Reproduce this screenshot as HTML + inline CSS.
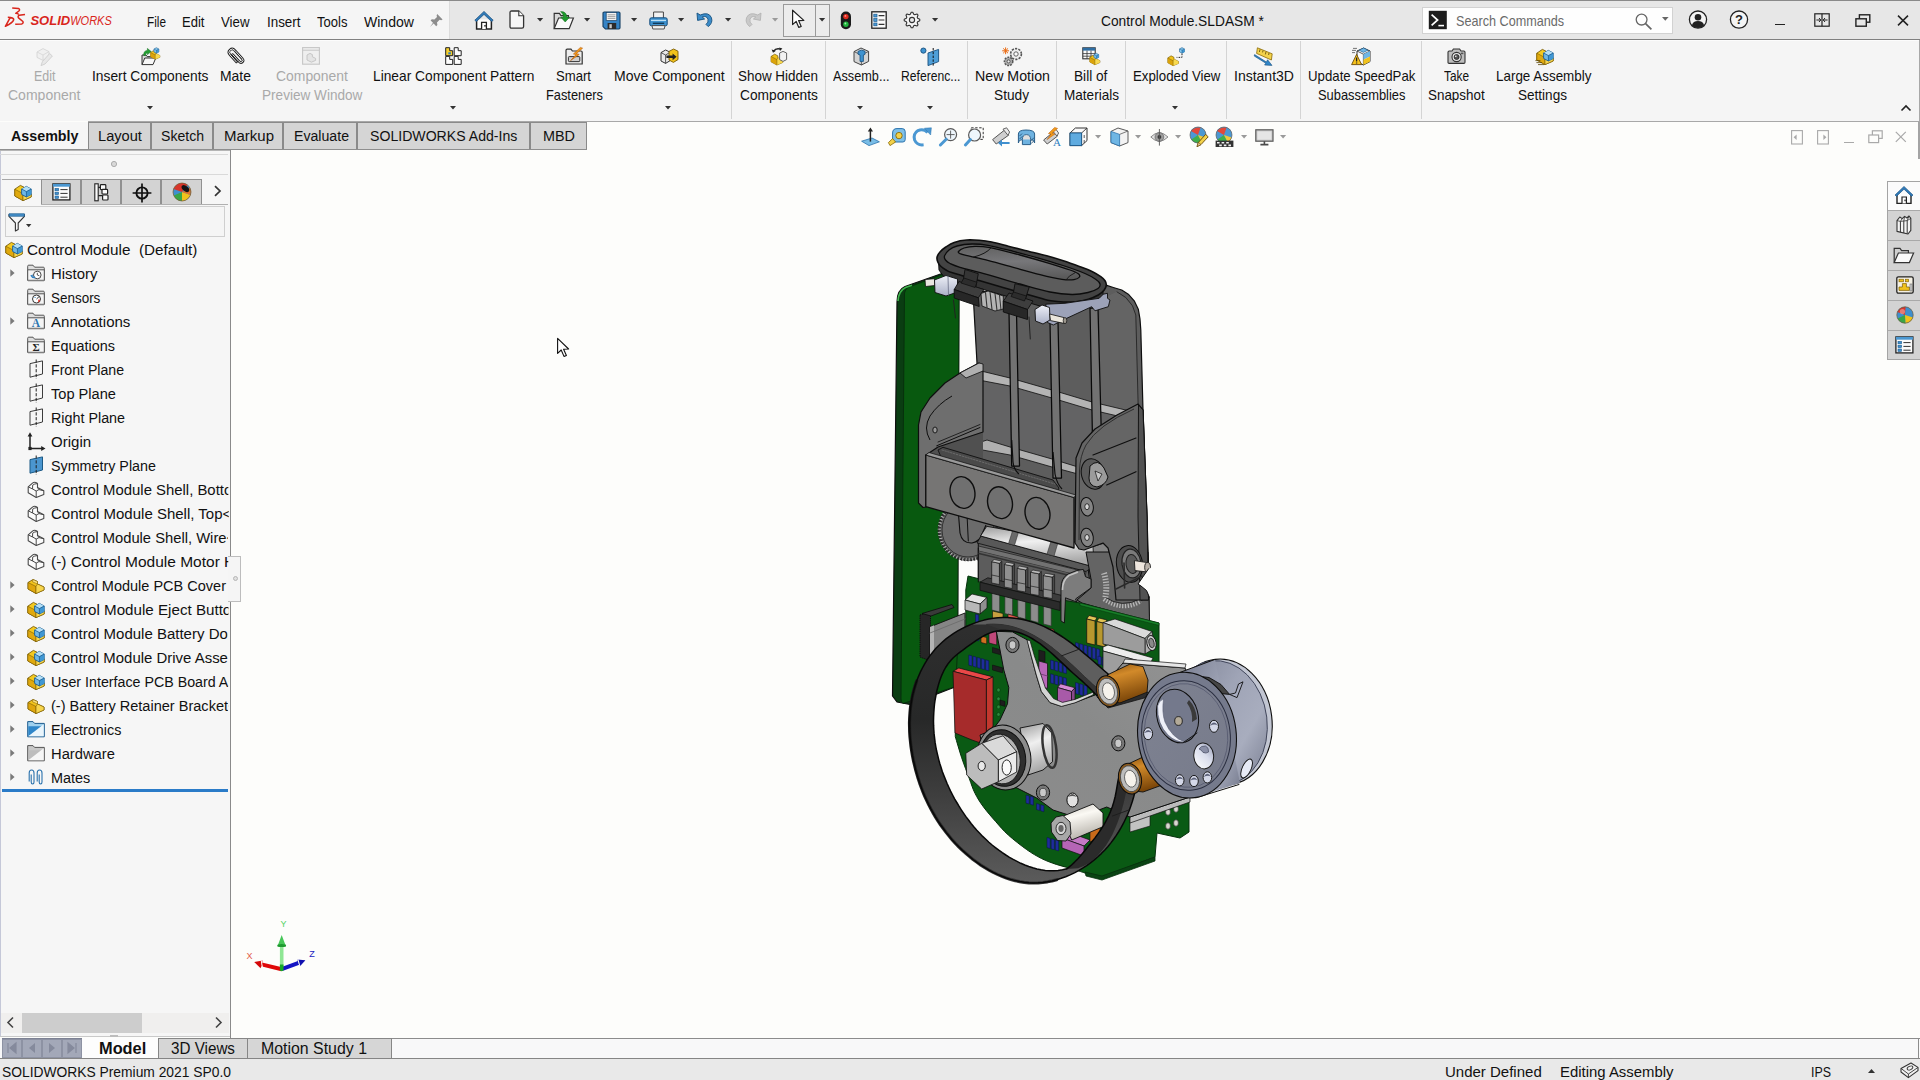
<!DOCTYPE html>
<html lang="en"><head><meta charset="utf-8"><title>SOLIDWORKS - Control Module.SLDASM</title>
<style>
html,body{margin:0;padding:0}
body{width:1920px;height:1080px;overflow:hidden;position:relative;background:#fdfdfb;font-family:"Liberation Sans",sans-serif;color:#111}
.t{position:absolute;white-space:pre;transform-origin:0 0}
.a{position:absolute}
svg{position:absolute;overflow:visible}
</style></head>
<body>
<div id="titlebar">
<div class="a" style="left:0px;top:0px;width:1920px;height:40px;background:#e7e7e7;"></div>
<div class="a" style="left:0px;top:0px;width:449px;height:40px;background:#f5f5f5;"></div>
<div class="a" style="left:0px;top:0px;width:1920px;height:1px;background:#8a8a8a;"></div>
<div class="a" style="left:449px;top:1px;width:1px;height:39px;background:#dcdcdc;"></div>
<div class="a" style="left:0px;top:39px;width:1920px;height:1px;background:#808080;"></div>
<div class="t" style="left:146.50px;top:12.78px;font-size:13.9px;line-height:18px;transform:scaleX(0.8490);color:#111;">File</div>
<div class="t" style="left:182.00px;top:12.78px;font-size:13.9px;line-height:18px;transform:scaleX(0.9384);color:#111;">Edit</div>
<div class="t" style="left:221.00px;top:12.78px;font-size:13.9px;line-height:18px;transform:scaleX(0.9537);color:#111;">View</div>
<div class="t" style="left:266.50px;top:12.78px;font-size:13.9px;line-height:18px;transform:scaleX(0.9640);color:#111;">Insert</div>
<div class="t" style="left:317.00px;top:12.78px;font-size:13.9px;line-height:18px;transform:scaleX(0.9397);color:#111;">Tools</div>
<div class="t" style="left:364.00px;top:12.78px;font-size:13.9px;line-height:18px;transform:scaleX(1.0104);color:#111;">Window</div>
<div class="t" style="left:1101.00px;top:12.38px;font-size:13.9px;line-height:18px;transform:scaleX(0.9904);color:#111;">Control Module.SLDASM *</div>
<div class="a" style="left:1422px;top:7px;width:251px;height:27px;background:#fefefe;border:1px solid #d2d2d2;box-sizing:border-box;"></div>
<div class="t" style="left:1455.50px;top:12.38px;font-size:13.9px;line-height:18px;transform:scaleX(0.9094);color:#6a6a6a;">Search Commands</div>
</div>
<div id="ribbon">
<div class="a" style="left:0px;top:40px;width:1920px;height:81px;background:#f5f5f5;"></div>
<div class="a" style="left:0px;top:40px;width:1920px;height:1px;background:#fcfcfc;"></div>
<div class="a" style="left:88px;top:121px;width:1832px;height:1px;background:#a8a8a8;"></div>
<div class="a" style="left:1919px;top:40px;width:1px;height:82px;background:#a8a8a8;"></div>
<div class="a" style="left:1918px;top:122px;width:2px;height:37px;background:#a4a4a4;"></div>
<div class="a" style="left:731px;top:41px;width:1px;height:78px;background:#d4d4d4;"></div>
<div class="a" style="left:825px;top:41px;width:1px;height:78px;background:#d4d4d4;"></div>
<div class="a" style="left:967px;top:41px;width:1px;height:78px;background:#d4d4d4;"></div>
<div class="a" style="left:1056px;top:41px;width:1px;height:78px;background:#d4d4d4;"></div>
<div class="a" style="left:1125px;top:41px;width:1px;height:78px;background:#d4d4d4;"></div>
<div class="a" style="left:1226px;top:41px;width:1px;height:78px;background:#d4d4d4;"></div>
<div class="a" style="left:1300px;top:41px;width:1px;height:78px;background:#d4d4d4;"></div>
<div class="a" style="left:1421px;top:41px;width:1px;height:78px;background:#d4d4d4;"></div>
<div class="t" style="left:34.00px;top:67.18px;font-size:13.9px;line-height:18px;transform:scaleX(0.8967);color:#a9a9a9;">Edit</div>
<div class="t" style="left:8.00px;top:86.18px;font-size:13.9px;line-height:18px;transform:scaleX(1.0089);color:#a9a9a9;">Component</div>
<div class="t" style="left:91.50px;top:67.18px;font-size:13.9px;line-height:18px;transform:scaleX(0.9919);color:#111;">Insert Components</div>
<div class="t" style="left:219.50px;top:67.18px;font-size:13.9px;line-height:18px;transform:scaleX(1.0023);color:#111;">Mate</div>
<div class="t" style="left:275.50px;top:67.18px;font-size:13.9px;line-height:18px;transform:scaleX(1.0019);color:#a9a9a9;">Component</div>
<div class="t" style="left:261.50px;top:86.18px;font-size:13.9px;line-height:18px;transform:scaleX(0.9777);color:#a9a9a9;">Preview Window</div>
<div class="t" style="left:372.50px;top:67.18px;font-size:13.9px;line-height:18px;transform:scaleX(0.9905);color:#111;">Linear Component Pattern</div>
<div class="t" style="left:556.00px;top:67.18px;font-size:13.9px;line-height:18px;transform:scaleX(0.9448);color:#111;">Smart</div>
<div class="t" style="left:545.50px;top:86.18px;font-size:13.9px;line-height:18px;transform:scaleX(0.9225);color:#111;">Fasteners</div>
<div class="t" style="left:613.70px;top:67.18px;font-size:13.9px;line-height:18px;transform:scaleX(1.0097);color:#111;">Move Component</div>
<div class="t" style="left:738.00px;top:67.18px;font-size:13.9px;line-height:18px;transform:scaleX(0.9673);color:#111;">Show Hidden</div>
<div class="t" style="left:739.50px;top:86.18px;font-size:13.9px;line-height:18px;transform:scaleX(0.9897);color:#111;">Components</div>
<div class="t" style="left:832.50px;top:67.18px;font-size:13.9px;line-height:18px;transform:scaleX(0.9145);color:#111;">Assemb...</div>
<div class="t" style="left:900.50px;top:67.18px;font-size:13.9px;line-height:18px;transform:scaleX(0.8754);color:#111;">Referenc...</div>
<div class="t" style="left:974.50px;top:67.18px;font-size:13.9px;line-height:18px;transform:scaleX(1.0219);color:#111;">New Motion</div>
<div class="t" style="left:994.00px;top:86.18px;font-size:13.9px;line-height:18px;transform:scaleX(0.9855);color:#111;">Study</div>
<div class="t" style="left:1074.00px;top:67.18px;font-size:13.9px;line-height:18px;transform:scaleX(0.9837);color:#111;">Bill of</div>
<div class="t" style="left:1064.00px;top:86.18px;font-size:13.9px;line-height:18px;transform:scaleX(0.9758);color:#111;">Materials</div>
<div class="t" style="left:1132.50px;top:67.18px;font-size:13.9px;line-height:18px;transform:scaleX(0.9538);color:#111;">Exploded View</div>
<div class="t" style="left:1234.00px;top:67.18px;font-size:13.9px;line-height:18px;transform:scaleX(1.0085);color:#111;">Instant3D</div>
<div class="t" style="left:1307.50px;top:67.18px;font-size:13.9px;line-height:18px;transform:scaleX(0.9524);color:#111;">Update SpeedPak</div>
<div class="t" style="left:1317.50px;top:86.18px;font-size:13.9px;line-height:18px;transform:scaleX(0.9285);color:#111;">Subassemblies</div>
<div class="t" style="left:1444.00px;top:67.18px;font-size:13.9px;line-height:18px;transform:scaleX(0.8524);color:#111;">Take</div>
<div class="t" style="left:1428.00px;top:86.18px;font-size:13.9px;line-height:18px;transform:scaleX(0.9655);color:#111;">Snapshot</div>
<div class="t" style="left:1495.50px;top:67.18px;font-size:13.9px;line-height:18px;transform:scaleX(0.9656);color:#111;">Large Assembly</div>
<div class="t" style="left:1518.00px;top:86.18px;font-size:13.9px;line-height:18px;transform:scaleX(0.9752);color:#111;">Settings</div>
<svg style="left:146.5px;top:106.25px" width="6.0" height="3.5" viewBox="0 0 6.0 3.5"><path d="M0 0H6.0L3.0 3.5Z" fill="#333"/></svg>
<svg style="left:450.0px;top:106.25px" width="6.0" height="3.5" viewBox="0 0 6.0 3.5"><path d="M0 0H6.0L3.0 3.5Z" fill="#333"/></svg>
<svg style="left:665.0px;top:106.25px" width="6.0" height="3.5" viewBox="0 0 6.0 3.5"><path d="M0 0H6.0L3.0 3.5Z" fill="#333"/></svg>
<svg style="left:857.0px;top:106.25px" width="6.0" height="3.5" viewBox="0 0 6.0 3.5"><path d="M0 0H6.0L3.0 3.5Z" fill="#333"/></svg>
<svg style="left:927.0px;top:106.25px" width="6.0" height="3.5" viewBox="0 0 6.0 3.5"><path d="M0 0H6.0L3.0 3.5Z" fill="#333"/></svg>
<svg style="left:1172.0px;top:106.25px" width="6.0" height="3.5" viewBox="0 0 6.0 3.5"><path d="M0 0H6.0L3.0 3.5Z" fill="#333"/></svg>
<svg style="left:1900px;top:104px" width="12" height="8" viewBox="0 0 12 8"><path d="M1.5 6.5L6 2L10.5 6.5" fill="none" stroke="#222" stroke-width="1.6"/></svg>
</div>
<div id="cmtabs">
<div class="a" style="left:0px;top:122px;width:88px;height:28px;background:#f6f6f6;"></div>
<div class="a" style="left:88px;top:122px;width:63px;height:28px;background:#d5d5d5;border:1px solid #8a8a8a;border-bottom:none;box-sizing:border-box;"></div>
<div class="a" style="left:151px;top:122px;width:62px;height:28px;background:#d5d5d5;border:1px solid #8a8a8a;border-bottom:none;box-sizing:border-box;"></div>
<div class="a" style="left:213px;top:122px;width:70px;height:28px;background:#d5d5d5;border:1px solid #8a8a8a;border-bottom:none;box-sizing:border-box;"></div>
<div class="a" style="left:283px;top:122px;width:74px;height:28px;background:#d5d5d5;border:1px solid #8a8a8a;border-bottom:none;box-sizing:border-box;"></div>
<div class="a" style="left:357px;top:122px;width:173px;height:28px;background:#d5d5d5;border:1px solid #8a8a8a;border-bottom:none;box-sizing:border-box;"></div>
<div class="a" style="left:530px;top:122px;width:57px;height:28px;background:#d5d5d5;border:1px solid #8a8a8a;border-bottom:none;box-sizing:border-box;"></div>
<div class="a" style="left:0px;top:149px;width:587px;height:1px;background:#8e8e8e;"></div>
<div class="a" style="left:0px;top:150px;width:231px;height:1px;background:#b5b5b5;"></div>
<div class="t" style="left:10.50px;top:125.86px;font-size:15.4px;line-height:20px;transform:scaleX(0.9276);color:#111;font-weight:700;">Assembly</div>
<div class="t" style="left:98.00px;top:125.86px;font-size:15.4px;line-height:20px;transform:scaleX(0.9508);color:#111;">Layout</div>
<div class="t" style="left:161.00px;top:125.86px;font-size:15.4px;line-height:20px;transform:scaleX(0.9140);color:#111;">Sketch</div>
<div class="t" style="left:224.00px;top:125.86px;font-size:15.4px;line-height:20px;transform:scaleX(0.9735);color:#111;">Markup</div>
<div class="t" style="left:293.50px;top:125.86px;font-size:15.4px;line-height:20px;transform:scaleX(0.9181);color:#111;">Evaluate</div>
<div class="t" style="left:370.00px;top:125.86px;font-size:15.4px;line-height:20px;transform:scaleX(0.9165);color:#111;">SOLIDWORKS Add-Ins</div>
<div class="t" style="left:542.50px;top:125.86px;font-size:15.4px;line-height:20px;transform:scaleX(0.9360);color:#111;">MBD</div>
</div>
<div id="featuremanager">
<div class="a" style="left:0px;top:151px;width:230px;height:886px;background:#f6f6f6;"></div>
<div class="a" style="left:230px;top:150px;width:1px;height:888px;background:#8a8a8a;"></div>
<div class="a" style="left:0px;top:151px;width:1px;height:886px;background:#c5c8d8;"></div>
<div class="a" style="left:0px;top:154px;width:228px;height:1px;background:#d9d9d9;"></div>
<div class="a" style="left:0px;top:174px;width:228px;height:1px;background:#d9d9d9;"></div>
<svg style="left:110px;top:160px" width="8" height="8" viewBox="0 0 8 8"><circle cx="4" cy="4" r="2.6" fill="#d8d8d8" stroke="#a5a5a5" stroke-width="0.9"/></svg>
<div class="a" style="left:2px;top:179px;width:39px;height:26px;background:#f6f6f6;border-top:1px solid #a8a8a8;box-sizing:border-box;"></div>
<div class="a" style="left:41px;top:179px;width:40px;height:26px;background:#d3d3d3;border:1px solid #909090;box-sizing:border-box;"></div>
<div class="a" style="left:81px;top:179px;width:40px;height:26px;background:#d3d3d3;border:1px solid #909090;box-sizing:border-box;"></div>
<div class="a" style="left:121px;top:179px;width:40px;height:26px;background:#d3d3d3;border:1px solid #909090;box-sizing:border-box;"></div>
<div class="a" style="left:161px;top:179px;width:41px;height:26px;background:#d3d3d3;border:1px solid #909090;box-sizing:border-box;"></div>
<div class="a" style="left:41px;top:204px;width:187px;height:1px;background:#b0b0b0;"></div>
<svg style="left:213px;top:185px" width="9" height="12" viewBox="0 0 9 12"><path d="M2 1.2L7 6L2 10.8" fill="none" stroke="#333" stroke-width="1.7"/></svg>
<div class="a" style="left:5px;top:206px;width:220px;height:31px;background:#f5f5f5;border:1px solid #cfcfcf;box-sizing:border-box;"></div>
<div class="a" style="left:228px;top:556px;width:13px;height:46px;background:#f5f5f5;border:1px solid #bdbdbd;border-left:none;box-sizing:border-box;"></div>
<svg style="left:232px;top:575px" width="7" height="7" viewBox="0 0 7 7"><circle cx="3.5" cy="3.5" r="2" fill="#e0e0e0" stroke="#aaa" stroke-width="0.8"/></svg>
<div class="a" style="left:2px;top:789px;width:226px;height:3px;background:#2a7bc8;"></div>
<div class="a" style="left:1px;top:1013px;width:228px;height:20px;background:#f0efee;"></div>
<div class="a" style="left:22px;top:1013px;width:120px;height:20px;background:#cdcdcd;"></div>
<svg style="left:6px;top:1016px" width="9" height="13" viewBox="0 0 9 13"><path d="M7 1.5L2 6.5L7 11.5" fill="none" stroke="#444" stroke-width="1.6"/></svg>
<svg style="left:214px;top:1016px" width="9" height="13" viewBox="0 0 9 13"><path d="M2 1.5L7 6.5L2 11.5" fill="none" stroke="#444" stroke-width="1.6"/></svg>
<div class="a" style="left:0px;top:1036px;width:230px;height:1px;background:#c9c9c9;"></div>
<div class="a" style="left:110px;top:1035px;width:8px;height:2px;background:#bdbdbd;"></div>
</div>
<div id="bottomtabs">
<div class="a" style="left:0px;top:1038px;width:1920px;height:22px;background:#f8f8f9;"></div>
<div class="a" style="left:231px;top:1038px;width:1689px;height:1px;background:#8c8c8c;"></div>
<div class="a" style="left:1918px;top:1038px;width:1px;height:21px;background:#8c8c8c;"></div>
<div class="a" style="left:2px;top:1038px;width:80px;height:21px;background:#a3a8b8;border:1px solid #7d8294;box-sizing:border-box;"></div>
<div class="a" style="left:2px;top:1039px;width:20px;height:19px;border:1px solid #8d92a3;box-sizing:border-box;"></div>
<div class="a" style="left:22px;top:1039px;width:20px;height:19px;border:1px solid #8d92a3;box-sizing:border-box;"></div>
<div class="a" style="left:42px;top:1039px;width:20px;height:19px;border:1px solid #8d92a3;box-sizing:border-box;"></div>
<div class="a" style="left:62px;top:1039px;width:20px;height:19px;border:1px solid #8d92a3;box-sizing:border-box;"></div>
<svg style="left:2px;top:1039px" width="20" height="19" viewBox="0 0 20 19"><path d="M6 4V14M14 4L8 9L14 14Z" fill="#858a9c" stroke="#858a9c" stroke-width="1.2"/></svg>
<svg style="left:22px;top:1039px" width="20" height="19" viewBox="0 0 20 19"><path d="M13 4L7 9L13 14Z" fill="#858a9c"/></svg>
<svg style="left:42px;top:1039px" width="20" height="19" viewBox="0 0 20 19"><path d="M7 4L13 9L7 14Z" fill="#858a9c"/></svg>
<svg style="left:62px;top:1039px" width="20" height="19" viewBox="0 0 20 19"><path d="M14 4V14M6 4L12 9L6 14Z" fill="#858a9c" stroke="#858a9c" stroke-width="1.2"/></svg>
<div class="a" style="left:82px;top:1038px;width:76px;height:22px;background:#fdfdfd;"></div>
<div class="a" style="left:158px;top:1038px;width:90px;height:21px;background:#d6d6d6;border:1px solid #868686;box-sizing:border-box;"></div>
<div class="a" style="left:247px;top:1038px;width:145px;height:21px;background:#d6d6d6;border:1px solid #868686;box-sizing:border-box;"></div>
<div class="t" style="left:98.70px;top:1039.39px;font-size:15.6px;line-height:20px;transform:scaleX(1.0492);color:#111;font-weight:700;">Model</div>
<div class="t" style="left:170.50px;top:1039.39px;font-size:15.6px;line-height:20px;transform:scaleX(0.9756);color:#111;">3D Views</div>
<div class="t" style="left:261.00px;top:1039.39px;font-size:15.6px;line-height:20px;transform:scaleX(1.0187);color:#111;">Motion Study 1</div>
</div>
<div id="statusbar">
<div class="a" style="left:0px;top:1059px;width:1920px;height:21px;background:#e9e9e9;"></div>
<div class="a" style="left:0px;top:1058px;width:1920px;height:1px;background:#858585;"></div>
<div class="t" style="left:1.50px;top:1062.64px;font-size:14.6px;line-height:19px;transform:scaleX(0.9472);color:#111;">SOLIDWORKS Premium 2021 SP0.0</div>
<div class="t" style="left:1444.70px;top:1062.64px;font-size:14.6px;line-height:19px;transform:scaleX(1.0279);color:#111;">Under Defined</div>
<div class="t" style="left:1560.40px;top:1062.64px;font-size:14.6px;line-height:19px;transform:scaleX(1.0218);color:#111;">Editing Assembly</div>
<div class="t" style="left:1811.00px;top:1062.64px;font-size:14.6px;line-height:19px;transform:scaleX(0.8508);color:#111;">IPS</div>
<svg style="left:1868px;top:1069px" width="7" height="4" viewBox="0 0 7 4"><path d="M0 4H7L3.5 0Z" fill="#333"/></svg>
</div>
<div id="icons">
<svg style="left:0px;top:0px" width="120" height="34" viewBox="0 0 120 34"><g fill="none" stroke="#d9261c" stroke-width="1.55" stroke-linejoin="round"><path d="M12.2 7.9L18.4 8.4Q20.4 9.4 18.9 11L15.8 13.3Q17.8 13.5 18.8 14.6"/><path d="M10.3 17.4L5.4 26.3Q12.8 22.8 13.7 19.8Q13.9 17.5 7.8 17.2"/><path d="M25 14.4L19.2 15.3Q17.5 16.2 18.5 17.9L22.9 21.5Q23.7 23.3 21.7 23.9L15.2 24.3"/></g><text x="30.4" y="24.8" font-family="Liberation Sans,sans-serif" font-weight="700" font-style="italic" font-size="12.4" fill="#d9261c" textLength="39.8" lengthAdjust="spacingAndGlyphs">SOLID</text><text x="70.2" y="24.8" font-family="Liberation Sans,sans-serif" font-style="italic" font-size="12.4" fill="#d9261c" textLength="41.6" lengthAdjust="spacingAndGlyphs">WORKS</text></svg>
<svg style="left:429px;top:13px" width="15" height="15" viewBox="0 0 15 15"><path d="M8.2 1L13.6 6.4L12.2 7.2L10.6 6.8L8 9.4L8.4 12L7.2 13.2L4.6 10.4L1 14L4 9.8L1.6 7.4L2.8 6.2L5.4 6.6L8 4L7.6 2.4Z" fill="#8c8c8c"/></svg>
<svg style="left:474px;top:10px" width="20" height="20" viewBox="0 0 20 20"><path d="M2.6 9.4V19H17.4V9.4" fill="#fdfdfd" stroke="#222" stroke-width="1.5"/><path d="M7.6 19V12.4H12.4V19" fill="#fff" stroke="#222" stroke-width="1.3"/><rect x="10.3" y="15" width="1.4" height="1.6" fill="#222"/><path d="M0.8 10.2L10 1.4L19.2 10.2L17.6 11.6L10 4.4L2.4 11.6Z" fill="#2f7ab8" stroke="#184d7c" stroke-width="0.7"/></svg>
<svg style="left:509px;top:10px" width="16" height="19" viewBox="0 0 16 19"><path d="M1 2.6Q1 1 2.6 1H9.8L14.6 5.8V16.6Q14.6 18.2 13 18.2H2.6Q1 18.2 1 16.6Z" fill="#f7f7f7" stroke="#333" stroke-width="1.3"/><path d="M9.8 1V5.8H14.6" fill="#fff" stroke="#333" stroke-width="1.1"/></svg>
<svg style="left:553px;top:10px" width="22" height="20" viewBox="0 0 22 20"><path d="M1.2 18.6V3.4H6.4L8 5.6H15.4V8" fill="#d7d7d7" stroke="#333" stroke-width="1.2"/><path d="M1.2 18.6L5.6 8H20.4L16.2 18.6Z" fill="#fafafa" stroke="#333" stroke-width="1.2"/><path d="M7.6 1.6Q13.6 1.4 13.8 7.2H16.6L12.2 12L7.8 7.2H10.6Q10.6 4.2 7.6 1.6Z" fill="#1f9a2e" stroke="#0e6a18" stroke-width="0.5"/></svg>
<svg style="left:601.5px;top:10.5px" width="19" height="19" viewBox="0 0 19 19"><path d="M1 2.2Q1 1 2.2 1H16.8Q18 1 18 2.2V16.8Q18 18 16.8 18H3.4L1 15.6Z" fill="#3584c6" stroke="#143e63" stroke-width="1.1"/><rect x="4.2" y="1.6" width="10.6" height="8" fill="#f4f4f4" stroke="#143e63" stroke-width="0.7"/><path d="M5.6 3.8H13.4M5.6 5.6H13.4M5.6 7.4H13.4" stroke="#8a8a8a" stroke-width="0.8"/><rect x="5.6" y="12" width="8.6" height="6" fill="#2b2b2b"/><rect x="7.4" y="13.2" width="2.4" height="4" fill="#c9c9c9"/></svg>
<svg style="left:648.5px;top:10.5px" width="19" height="19" viewBox="0 0 19 19"><path d="M4.6 7V1H14.4V7" fill="#f2f2f2" stroke="#444" stroke-width="1"/><rect x="0.8" y="6.8" width="17.4" height="8" rx="1.6" fill="#3f93d0" stroke="#174f7e" stroke-width="1"/><path d="M2 9.4H17" stroke="#bfe1f6" stroke-width="1.2"/><path d="M3.8 11.6H15.2V13H3.8Z" fill="#0f3a5c"/><path d="M3 14.6H16L15.2 18H3.8Z" fill="#f0f0f0" stroke="#444" stroke-width="0.9"/></svg>
<svg style="left:696px;top:12px" width="18" height="15" viewBox="0 0 18 15"><path d="M1 1L1.6 8.4L8.6 7L6.2 5Q10.6 3.4 12 7.2Q12.8 10.4 10 12.4L12.2 14.6Q17.2 11 15.4 5.6Q12.6 -0.6 4.2 3Z" fill="#3b8cc9" stroke="#15507f" stroke-width="0.9" stroke-linejoin="round"/></svg>
<svg style="left:743.5px;top:12px" width="18" height="15" viewBox="0 0 18 15"><path d="M17 1L16.4 8.4L9.4 7L11.8 5Q7.4 3.4 6 7.2Q5.2 10.4 8 12.4L5.8 14.6Q0.8 11 2.6 5.6Q5.4 -0.6 13.8 3Z" fill="#c9c9c9" stroke="#b0b0b0" stroke-width="0.8" stroke-linejoin="round"/></svg>
<svg style="left:537.4px;top:17.5px" width="6.2" height="3.6" viewBox="0 0 6.2 3.6"><path d="M0 0H6.2L3.1 3.6Z" fill="#333"/></svg>
<svg style="left:584.4px;top:17.5px" width="6.2" height="3.6" viewBox="0 0 6.2 3.6"><path d="M0 0H6.2L3.1 3.6Z" fill="#333"/></svg>
<svg style="left:631.4px;top:17.5px" width="6.2" height="3.6" viewBox="0 0 6.2 3.6"><path d="M0 0H6.2L3.1 3.6Z" fill="#333"/></svg>
<svg style="left:678.4px;top:17.5px" width="6.2" height="3.6" viewBox="0 0 6.2 3.6"><path d="M0 0H6.2L3.1 3.6Z" fill="#333"/></svg>
<svg style="left:725.4px;top:17.5px" width="6.2" height="3.6" viewBox="0 0 6.2 3.6"><path d="M0 0H6.2L3.1 3.6Z" fill="#333"/></svg>
<svg style="left:772.1999999999999px;top:17.5px" width="6.2" height="3.6" viewBox="0 0 6.2 3.6"><path d="M0 0H6.2L3.1 3.6Z" fill="#9a9a9a"/></svg>
<svg style="left:932.1999999999999px;top:17.5px" width="6.2" height="3.6" viewBox="0 0 6.2 3.6"><path d="M0 0H6.2L3.1 3.6Z" fill="#333"/></svg>
<div class="a" style="left:783px;top:4px;width:47px;height:33px;background:#ececec;border:1px solid #9a9a9a;box-sizing:border-box;"></div>
<div class="a" style="left:815px;top:5px;width:1px;height:31px;background:#9a9a9a;"></div>
<svg style="left:819.3px;top:17.5px" width="6.2" height="3.6" viewBox="0 0 6.2 3.6"><path d="M0 0H6.2L3.1 3.6Z" fill="#333"/></svg>
<svg style="left:791px;top:9px" width="16" height="20" viewBox="0 0 16 20"><path d="M1.6 1.2L1.6 15.6L5.2 12.4L7.8 18.4L10.2 17.4L7.6 11.6L12.8 11.4Z" fill="#fff" stroke="#222" stroke-width="1.2" stroke-linejoin="round"/></svg>
<svg style="left:840px;top:10.5px" width="12" height="19" viewBox="0 0 12 19"><rect x="0.8" y="0.6" width="10.2" height="17.6" rx="5" fill="#1b1b1b"/><circle cx="5.9" cy="5.6" r="2.7" fill="#e02a1e"/><circle cx="5.9" cy="13.2" r="2.7" fill="#1fb23c"/><circle cx="5.4" cy="4.9" r="0.9" fill="#ff9a8a"/><circle cx="5.4" cy="12.5" r="0.9" fill="#9df2a8"/></svg>
<svg style="left:871px;top:11px" width="16" height="18" viewBox="0 0 16 18"><rect x="0.8" y="0.8" width="14.4" height="16.4" fill="#fbfbfb" stroke="#222" stroke-width="1.3"/><rect x="2.8" y="3.2" width="3.2" height="2.8" fill="#4b9ad6" stroke="#1d5c8f" stroke-width="0.7"/><rect x="2.8" y="7.6" width="3.2" height="2.8" fill="#4b9ad6" stroke="#1d5c8f" stroke-width="0.7"/><rect x="2.8" y="12" width="3.2" height="2.8" fill="#4b9ad6" stroke="#1d5c8f" stroke-width="0.7"/><path d="M7.6 4.6H13.4M7.6 9H13.4M7.6 13.4H13.4" stroke="#333" stroke-width="1.1"/></svg>
<svg style="left:904px;top:12px" width="16" height="16" viewBox="0 0 16 16"><path d="M15.76 7.24 L15.76 8.76 L13.65 9.71 L13.20 10.78 L14.03 12.95 L12.95 14.03 L10.78 13.20 L9.71 13.65 L8.76 15.76 L7.24 15.76 L6.29 13.65 L5.22 13.20 L3.05 14.03 L1.97 12.95 L2.80 10.78 L2.35 9.71 L0.24 8.76 L0.24 7.24 L2.35 6.29 L2.80 5.22 L1.97 3.05 L3.05 1.97 L5.22 2.80 L6.29 2.35 L7.24 0.24 L8.76 0.24 L9.71 2.35 L10.78 2.80 L12.95 1.97 L14.03 3.05 L13.20 5.22 L13.65 6.29Z" fill="#f4f4f4" stroke="#333" stroke-width="1.1" stroke-linejoin="round"/><circle cx="8" cy="8" r="2.6" fill="#e8e8e8" stroke="#333" stroke-width="1.1"/></svg>
<svg style="left:1428px;top:10px" width="20" height="20" viewBox="0 0 20 20"><rect x="0.8" y="0.8" width="18" height="18.4" fill="#1d1d1d"/><path d="M3.6 4.6L9.6 10L3.6 15.4" fill="none" stroke="#fff" stroke-width="1.7"/><path d="M10.4 15.6H16" stroke="#fff" stroke-width="1.6"/></svg>
<svg style="left:1635px;top:13px" width="18" height="18" viewBox="0 0 18 18"><circle cx="6.6" cy="6.6" r="5.4" fill="none" stroke="#666" stroke-width="1.3"/><path d="M10.6 10.6L16.4 16.4" stroke="#666" stroke-width="1.7"/></svg>
<svg style="left:1661.9px;top:17.1px" width="6.6" height="3.8" viewBox="0 0 6.6 3.8"><path d="M0 0H6.6L3.3 3.8Z" fill="#666"/></svg>
<svg style="left:1688px;top:9.6px" width="20" height="20" viewBox="0 0 20 20"><circle cx="10" cy="9.6" r="8.6" fill="#f4f4f4" stroke="#222" stroke-width="1.3"/><circle cx="10" cy="7.2" r="3.3" fill="#222"/><path d="M3.8 15.4Q5 11 10 11Q15 11 16.2 15.4Q13.4 18 10 18Q6.6 18 3.8 15.4Z" fill="#222"/></svg>
<svg style="left:1729px;top:9.6px" width="20" height="20" viewBox="0 0 20 20"><circle cx="10" cy="9.6" r="8.6" fill="#f4f4f4" stroke="#222" stroke-width="1.3"/><text x="10" y="14.4" font-family="Liberation Sans,sans-serif" font-weight="700" font-size="13" text-anchor="middle" fill="#222">?</text></svg>
<div class="a" style="left:1775px;top:23.6px;width:10px;height:1.8px;background:#222;"></div>
<svg style="left:1813.5px;top:13px" width="16" height="14" viewBox="0 0 16 14"><rect x="0.8" y="0.8" width="14.4" height="12.4" fill="none" stroke="#222" stroke-width="1.2"/><path d="M8 0.8V13.2" stroke="#222" stroke-width="1.2"/><path d="M2.4 7H6.6M5 5L6.8 7L5 9M13.6 7H9.4M11 5L9.2 7L11 9" fill="none" stroke="#222" stroke-width="1"/></svg>
<svg style="left:1854.5px;top:13.5px" width="16" height="13" viewBox="0 0 16 13"><rect x="4.4" y="0.8" width="10.4" height="7.4" fill="none" stroke="#222" stroke-width="1.4"/><rect x="0.9" y="4.8" width="10.4" height="7.4" fill="#e7e7e7" stroke="#222" stroke-width="1.4"/></svg>
<svg style="left:1897px;top:15px" width="12" height="11" viewBox="0 0 12 11"><path d="M1 0.6L11 10.4M11 0.6L1 10.4" stroke="#222" stroke-width="1.5"/></svg>
<svg style="left:1791px;top:130px" width="12" height="15" viewBox="0 0 12 15"><rect x="0.6" y="0.6" width="10.8" height="13.4" fill="none" stroke="#a9a9a9" stroke-width="1.1"/><path d="M5.6 4.6V10L2.6 7.3Z" fill="#a9a9a9"/></svg>
<svg style="left:1817px;top:130px" width="12" height="15" viewBox="0 0 12 15"><rect x="0.6" y="0.6" width="10.8" height="13.4" fill="none" stroke="#a9a9a9" stroke-width="1.1"/><path d="M6.4 4.6V10L9.4 7.3Z" fill="#a9a9a9"/></svg>
<div class="a" style="left:1844px;top:141.5px;width:10px;height:1.6px;background:#a9a9a9;"></div>
<svg style="left:1868px;top:130px" width="15" height="14" viewBox="0 0 15 14"><rect x="4.4" y="0.8" width="9.8" height="7.6" fill="none" stroke="#a9a9a9" stroke-width="1.2"/><rect x="0.8" y="5" width="9.8" height="7.6" fill="#fdfdfb" stroke="#a9a9a9" stroke-width="1.2"/></svg>
<svg style="left:1895px;top:131px" width="12" height="12" viewBox="0 0 12 12"><path d="M0.8 0.8L10.8 10.8M10.8 0.8L0.8 10.8" stroke="#a9a9a9" stroke-width="1.2"/></svg>
<svg style="left:35px;top:47px" width="19" height="20" viewBox="0 0 19 20"><g opacity="0.55"><path d="M2 5L8 1.6L14 4.6V10L8 13.4L2 10.4Z" fill="#ececec" stroke="#bdbdbd" stroke-width="0.9"/><path d="M2 5L8 8V13.4M8 8L14 4.6" fill="none" stroke="#bdbdbd" stroke-width="0.8"/><path d="M6 18.6L7.4 14.6L14.6 6.6L17.4 9L10 17Z" fill="#dedede" stroke="#b0b0b0" stroke-width="0.9"/></g></svg>
<svg style="left:141px;top:47px" width="20" height="19" viewBox="0 0 20 19"><path d="M1 17.6V8H5L6.2 9.6H11.6V11" fill="#d9d9d9" stroke="#333" stroke-width="1"/><path d="M1 17.6L3.8 11H14.8L12 17.6Z" fill="#f7f7f7" stroke="#333" stroke-width="1"/><path d="M2.6 8.4Q2.6 3.6 6.4 3.4V1.4L10.2 4.6L6.4 7.6V5.8Q4.6 6 4.4 8.6Z" fill="#23a033" stroke="#0f6a1a" stroke-width="0.5"/><g transform="translate(9.2,2.2) scale(0.72)" opacity="1"><path d="M0.5 4.5L4.5 2L8 3.8V6L13.5 8.8V11.2L7 14L0.5 10.5Z" fill="#f1c21b" stroke="#7a5c04" stroke-width="0.8" stroke-linejoin="round"/><path d="M0.5 4.5L7 8V14L0.5 10.5Z" fill="#dba30a"/><path d="M7 8L8 6L13.5 8.8V11.2L7 14Z" fill="#f8d94f"/><path d="M0.5 4.5L7 8V14M7 8L8 6" fill="none" stroke="#7a5c04" stroke-width="0.6"/></g><g transform="translate(12.6,0.4) scale(0.62)"><path d="M0.5 2.6L4.5 0.5L8.5 2.6V7.4L4.5 9.5L0.5 7.4Z" fill="#86c8ee" stroke="#1d5c8f" stroke-width="0.9" stroke-linejoin="round"/><path d="M4.5 4.7L8.5 2.6V7.4L4.5 9.5Z" fill="#3f97d3"/><path d="M0.5 2.6L4.5 4.7L8.5 2.6M4.5 4.7V9.5" fill="none" stroke="#1d5c8f" stroke-width="0.8"/></g></svg>
<svg style="left:226px;top:46px" width="19" height="20" viewBox="0 0 19 20"><g transform="rotate(-42 9.5 10)"><path d="M6.2 15V5.6Q6.2 1.8 9.5 1.8Q12.8 1.8 12.8 5.6V16.4Q12.8 19 10.6 19Q8.4 19 8.4 16.4V7" fill="none" stroke="#222" stroke-width="2.6" stroke-linecap="round"/><path d="M6.2 15V5.6Q6.2 1.8 9.5 1.8Q12.8 1.8 12.8 5.6V16.4Q12.8 19 10.6 19Q8.4 19 8.4 16.4V7" fill="none" stroke="#f4f4f4" stroke-width="0.9" stroke-linecap="round"/></g></svg>
<svg style="left:302px;top:47px" width="18" height="18" viewBox="0 0 18 18"><rect x="0.6" y="0.6" width="16.8" height="16.6" fill="#efefef" stroke="#c6c6c6" stroke-width="1.1"/><path d="M0.6 3.2H17.4" stroke="#c6c6c6" stroke-width="1"/><path d="M5 8L8 6.4L10.4 7.6V9.8L13.6 11.4V13.4L9.4 15.2L5 13Z" fill="#e4e4e4" stroke="#c2c2c2" stroke-width="0.9"/></svg>
<svg style="left:445px;top:47px" width="17" height="18" viewBox="0 0 17 18"><path d="M0.7 0.7H4.7V3.7H7.7V8.7H0.7Z" fill="#f6cf2e" stroke="#222" stroke-width="1"/><rect x="3.3" y="5.3" width="2.6" height="2" fill="#2f7fc0"/><path d="M9.2 0.7H13.2V3.7H16.2V8.7H9.2Z" fill="#fdfdfd" stroke="#222" stroke-width="1"/><path d="M0.7 9.4H4.7V12.4H7.7V17.4H0.7Z" fill="#fdfdfd" stroke="#222" stroke-width="1"/><path d="M9.2 9.4H13.2V12.4H16.2V17.4H9.2Z" fill="#fdfdfd" stroke="#222" stroke-width="1"/></svg>
<svg style="left:565px;top:47px" width="19" height="18" viewBox="0 0 19 18"><path d="M1 17V3.4Q1 2.2 2.2 2.2H6L7.4 4H16Q17.2 4 17.2 5.2V17Z" fill="#ededed" stroke="#333" stroke-width="1.2"/><rect x="3.4" y="9.6" width="11.4" height="5" rx="0.8" fill="#cfcfcf" stroke="#333" stroke-width="1"/><path d="M15.4 0.4L8.4 7L11 7.6L5.6 13.6L14.2 7.4L11.4 6.6L17.6 1.2Z" fill="#f09a1a" stroke="#b85a0a" stroke-width="0.6"/></svg>
<svg style="left:660px;top:48px" width="19" height="17" viewBox="0 0 19 17"><path d="M1 4.6L5.6 2L10.2 4.2V12.6L5.6 15.4L1 13Z" fill="#e9e9e9" stroke="#333" stroke-width="1"/><path d="M1 4.6L5.6 7V15.4M5.6 7L10.2 4.2" fill="none" stroke="#333" stroke-width="0.8"/><path d="M9 3.4L13.6 1L18 3.2V11.6L13.4 14.4L9 12Z" fill="#f1c21b" stroke="#7a5c04" stroke-width="0.9"/><path d="M6.4 7.6H12.6V5.4L16.6 8.8L12.6 12.2V10H6.4Z" fill="#222"/></svg>
<svg style="left:770px;top:47px" width="18" height="19" viewBox="0 0 18 19"><g transform="translate(0.6,5.4) scale(0.9)" opacity="1"><path d="M0.5 4.5L4.5 2L8 3.8V6L13.5 8.8V11.2L7 14L0.5 10.5Z" fill="#f1c21b" stroke="#7a5c04" stroke-width="0.8" stroke-linejoin="round"/><path d="M0.5 4.5L7 8V14L0.5 10.5Z" fill="#dba30a"/><path d="M7 8L8 6L13.5 8.8V11.2L7 14Z" fill="#f8d94f"/><path d="M0.5 4.5L7 8V14M7 8L8 6" fill="none" stroke="#7a5c04" stroke-width="0.6"/></g><path d="M9.6 6L13 4.4L16.6 6V12.6L13 14.4L9.6 12.6Z" fill="#f2f2f2" stroke="#555" stroke-width="0.9"/><path d="M3.4 4.4Q6 0.6 10.6 2.2" fill="none" stroke="#222" stroke-width="1.3"/><path d="M1.6 2.4L3 5.8L6 3.8ZM12.4 1.4L9.2 0.6L10 4Z" fill="#222"/></svg>
<svg style="left:853px;top:47px" width="17" height="19" viewBox="0 0 17 19"><path d="M1 4.6L8 1L15.6 4.4V14.4L8.4 18L1 14.6Z" fill="#d4d4d4" stroke="#444" stroke-width="1"/><path d="M1 4.6L8.4 8V18M8.4 8L15.6 4.4" fill="none" stroke="#444" stroke-width="0.8"/><path d="M5 4.4Q8.4 2 12 4.2V7.4L10.4 8V14.4H7V8L5 7.2Z" fill="#3f93d0" stroke="#174f7e" stroke-width="0.8"/></svg>
<svg style="left:920px;top:46.5px" width="21" height="20" viewBox="0 0 21 20"><circle cx="3.4" cy="3.6" r="2.6" fill="#3f93d0" stroke="#174f7e" stroke-width="0.9"/><path d="M8 6L18.6 2.4V14.6L8 18.6Z" fill="#4f9fd8" stroke="#174f7e" stroke-width="0.9"/><path d="M13.2 1V20" stroke="#111" stroke-width="1" stroke-dasharray="2.4 1.4"/></svg>
<svg style="left:1002px;top:46.5px" width="21" height="20" viewBox="0 0 21 20"><circle cx="14" cy="7" r="5.4" fill="#efefef" stroke="#555" stroke-width="1.6" stroke-dasharray="2.2 1.2"/><circle cx="14" cy="7" r="2.2" fill="#fafafa" stroke="#555" stroke-width="0.9"/><circle cx="6.6" cy="14.4" r="4.2" fill="#a9a9a9" stroke="#555" stroke-width="1.5" stroke-dasharray="1.9 1.1"/><circle cx="6.6" cy="14.4" r="1.5" fill="#f0f0f0" stroke="#444" stroke-width="0.8"/><path d="M3.6 0.4V7.2M0.2 3.8H7M1.2 1.4L6 6.2M6 1.4L1.2 6.2" stroke="#ea6a12" stroke-width="1"/></svg>
<svg style="left:1082px;top:47px" width="19" height="18" viewBox="0 0 19 18"><rect x="0.8" y="0.8" width="12.4" height="11" fill="#fafafa" stroke="#333" stroke-width="1.1"/><rect x="0.8" y="0.8" width="12.4" height="2.8" fill="#2f6ea3"/><path d="M0.8 6.6H13.2M0.8 9.2H13.2M5 3.6V11.8M9 3.6V11.8" stroke="#333" stroke-width="0.8"/><g transform="translate(7.4,6.8) scale(0.78)" opacity="1"><path d="M0.5 4.5L4.5 2L8 3.8V6L13.5 8.8V11.2L7 14L0.5 10.5Z" fill="#f1c21b" stroke="#7a5c04" stroke-width="0.8" stroke-linejoin="round"/><path d="M0.5 4.5L7 8V14L0.5 10.5Z" fill="#dba30a"/><path d="M7 8L8 6L13.5 8.8V11.2L7 14Z" fill="#f8d94f"/><path d="M0.5 4.5L7 8V14M7 8L8 6" fill="none" stroke="#7a5c04" stroke-width="0.6"/></g><g transform="translate(11.6,6) scale(0.6)"><path d="M0.5 2.6L4.5 0.5L8.5 2.6V7.4L4.5 9.5L0.5 7.4Z" fill="#86c8ee" stroke="#1d5c8f" stroke-width="0.9" stroke-linejoin="round"/><path d="M4.5 4.7L8.5 2.6V7.4L4.5 9.5Z" fill="#3f97d3"/><path d="M0.5 2.6L4.5 4.7L8.5 2.6M4.5 4.7V9.5" fill="none" stroke="#1d5c8f" stroke-width="0.8"/></g></svg>
<svg style="left:1167px;top:46.5px" width="19" height="19" viewBox="0 0 19 19"><g transform="translate(0.4,7.2) scale(0.82)" opacity="1"><path d="M0.5 4.5L4.5 2L8 3.8V6L13.5 8.8V11.2L7 14L0.5 10.5Z" fill="#f1c21b" stroke="#7a5c04" stroke-width="0.8" stroke-linejoin="round"/><path d="M0.5 4.5L7 8V14L0.5 10.5Z" fill="#dba30a"/><path d="M7 8L8 6L13.5 8.8V11.2L7 14Z" fill="#f8d94f"/><path d="M0.5 4.5L7 8V14M7 8L8 6" fill="none" stroke="#7a5c04" stroke-width="0.6"/></g><g transform="translate(12.2,0.3) scale(0.62)"><path d="M0.5 2.6L4.5 0.5L8.5 2.6V7.4L4.5 9.5L0.5 7.4Z" fill="#86c8ee" stroke="#1d5c8f" stroke-width="0.9" stroke-linejoin="round"/><path d="M4.5 4.7L8.5 2.6V7.4L4.5 9.5Z" fill="#3f97d3"/><path d="M0.5 2.6L4.5 4.7L8.5 2.6M4.5 4.7V9.5" fill="none" stroke="#1d5c8f" stroke-width="0.8"/></g><path d="M15 6.6V10.4H9.6" fill="none" stroke="#222" stroke-width="1" stroke-dasharray="1.6 1.2"/></svg>
<svg style="left:1254px;top:46.5px" width="19" height="19" viewBox="0 0 19 19"><path d="M3.4 0.8L18.2 6.8L17.4 13L2.6 6.4Z" fill="#f3d24a" stroke="#8a6a05" stroke-width="0.8"/><path d="M6 2.4L5.4 5M9 3.6L8.6 5.4M12 4.8L11.4 7.4M15 6L14.6 8" stroke="#5a4504" stroke-width="0.8"/><path d="M0.6 7.6L12.4 15L13.6 12.8L18 18.4L10.6 18L11.8 16.2L0.2 9Z" fill="#2f86c9" stroke="#174f7e" stroke-width="0.6"/></svg>
<svg style="left:1351px;top:46.5px" width="20" height="19" viewBox="0 0 20 19"><path d="M6 4L12.6 1L19 4V14.6L12.4 18L6 14.8Z" fill="#fbfbfb" stroke="#333" stroke-width="1"/><path d="M6 4L12.4 7.2V18M12.4 7.2L19 4" fill="none" stroke="#333" stroke-width="0.8"/><path d="M12.4 7.2L19 4V9.6L12.4 12.8Z" fill="#6eb6e6"/><path d="M8 3.2L12.6 1L17 3.2L12.4 5.4Z" fill="#6eb6e6" stroke="#1d5c8f" stroke-width="0.6"/><path d="M12.4 12.8L19 9.6V14.6L12.4 18Z" fill="#f1c21b"/><path d="M5.6 7.4L10.6 17.6H0.6Z" fill="#f6c21a" stroke="#6a4a04" stroke-width="0.9"/><path d="M5.6 10.6V14.4M5.6 15.4V16.6" stroke="#222" stroke-width="1.3"/><path d="M1 3.4H5M1 5.6H4M2 1.4H6" stroke="#555" stroke-width="0.8"/></svg>
<svg style="left:1447px;top:48px" width="19" height="16" viewBox="0 0 19 16"><path d="M1 4.2Q1 3 2.2 3H5L6.4 1H12.6L14 3H16.8Q18 3 18 4.2V14.2Q18 15.4 16.8 15.4H2.2Q1 15.4 1 14.2Z" fill="#bdbdbd" stroke="#333" stroke-width="1.1"/><circle cx="9.6" cy="9" r="4.6" fill="#e9e9e9" stroke="#333" stroke-width="1.1"/><circle cx="9.6" cy="9" r="2.5" fill="#555" stroke="#222" stroke-width="0.8"/><circle cx="8.8" cy="8.2" r="0.8" fill="#fff"/><rect x="14" y="4.6" width="2.4" height="1.6" fill="#555"/></svg>
<svg style="left:1534.5px;top:46.5px" width="19" height="19" viewBox="0 0 19 19"><g transform="translate(1,0)"><path d="M0.8 6.2L6.4 2.4L10 4.2V9L17.2 11V14L9 17.6L0.8 13Z" fill="#f4c920" stroke="#7a5c04" stroke-width="0.9" stroke-linejoin="round"/><path d="M0.8 6.2L9 10.6V17.6L0.8 13Z" fill="#e0a90e" stroke="#7a5c04" stroke-width="0.6"/><path d="M9 10.6V17.6L17.2 14V11Z" fill="#f7d64e" stroke="#7a5c04" stroke-width="0.6"/><path d="M7.6 6L12.4 3.4L17.2 6V11.4L12.4 14L7.6 11.4Z" fill="#6fb8e6" stroke="#1d5c8f" stroke-width="0.9" stroke-linejoin="round"/><path d="M7.6 6L12.4 3.4L17.2 6L12.4 8.6Z" fill="#b4dff6"/><path d="M12.4 8.6L17.2 6V11.4L12.4 14Z" fill="#3f97d3"/><path d="M7.6 6L12.4 8.6L17.2 6M12.4 8.6V14" fill="none" stroke="#1d5c8f" stroke-width="0.8"/></g><path d="M0.4 13.6H5.4M1.4 15.6H7M3 17.6H9" stroke="#5a4504" stroke-width="0.8"/></svg>
<svg style="left:860.5px;top:127px" width="19" height="20" viewBox="0 0 19 20"><path d="M0.6 14.2L11 11L18.4 14.8L8 18.6Z" fill="#79bde6" stroke="#2a72ad" stroke-width="0.8"/><path d="M9.4 14.6V2.6" stroke="#222" stroke-width="1.5"/><path d="M6.8 4.4L9.4 0.4L12 4.4Z" fill="#222"/></svg>
<svg style="left:886.5px;top:127px" width="19" height="20" viewBox="0 0 19 20"><path d="M5.6 6Q5.6 1.6 10 1.6H15.2Q18.2 1.6 18.2 4.6V12.6Q18.2 15 15.8 15H5.6Z" fill="#7fc0e8" stroke="#2a72ad" stroke-width="1"/><circle cx="12" cy="8.6" r="3.2" fill="#f3d24a" stroke="#8a6a05" stroke-width="0.9"/><path d="M5.6 11.6L1.4 15.6L3 18.6L8.6 15Z" fill="#f3d24a" stroke="#8a6a05" stroke-width="0.8"/></svg>
<svg style="left:912px;top:127px" width="20" height="20" viewBox="0 0 20 20"><path d="M15.6 5.6Q11.4 1 6 3.6Q0.8 7 2.6 13Q5 18.6 11.6 17.8" fill="none" stroke="#4b98d2" stroke-width="3"/><path d="M12.4 1.2L19.4 0.8L18.6 8Z" fill="#4b98d2" stroke="#2a72ad" stroke-width="0.5"/></svg>
<svg style="left:938.5px;top:127px" width="19" height="20" viewBox="0 0 19 20"><circle cx="11.6" cy="7.6" r="6" fill="#eef6fc" stroke="#5a5a5a" stroke-width="1.2"/><path d="M11.6 3.6V11.6M7.6 7.6H15.6" stroke="#555" stroke-width="0.9"/><path d="M7.2 12.2L1.4 18" stroke="#4b98d2" stroke-width="3" stroke-linecap="round"/></svg>
<svg style="left:964px;top:127px" width="20" height="20" viewBox="0 0 20 20"><rect x="7.2" y="0.8" width="12" height="11.6" fill="none" stroke="#333" stroke-width="1" stroke-dasharray="2.4 1.6"/><circle cx="10.6" cy="8" r="6" fill="#eef6fc" stroke="#5a5a5a" stroke-width="1.2"/><path d="M6.4 12.6L1.4 18" stroke="#4b98d2" stroke-width="3" stroke-linecap="round"/></svg>
<svg style="left:990.5px;top:127px" width="19" height="20" viewBox="0 0 19 20"><path d="M1.6 12.6L13.6 3L17.6 8.2L5.2 17Z" fill="#cfcfcf" stroke="#555" stroke-width="1"/><path d="M12 2.2L15.6 0.8L18.6 5L17 8.4Z" fill="#e9e9e9" stroke="#555" stroke-width="0.9"/><path d="M18.6 15H11V12.6L7 16L11 19.4V17H18.6Z" fill="#3f8fce"/></svg>
<svg style="left:1017px;top:127px" width="19" height="20" viewBox="0 0 19 20"><path d="M1.4 7Q1.4 3 9 3Q17.6 3 17.6 7V16Q17.6 12.6 13.6 12.6V17.6H5.4V12.6Q1.4 12.6 1.4 16Z" fill="#6fb3e0" stroke="#2a5f8a" stroke-width="1"/><path d="M5.4 12.6Q5.4 7.6 9.4 7.6Q13.6 7.6 13.6 12.6" fill="#dfdfdf" stroke="#2a5f8a" stroke-width="0.9"/><path d="M2.6 9L5 6.6M2.6 12L5.2 9.4M14.2 16.6L17 13.6M14.2 13.6L17 10.6" stroke="#1d4a70" stroke-width="0.8"/></svg>
<svg style="left:1042px;top:127px" width="20" height="20" viewBox="0 0 20 20"><path d="M1.6 13L12 4.6L15.6 9L5.2 17Z" fill="#cfcfcf" stroke="#555" stroke-width="1"/><path d="M10.6 4L14 2.4L16.6 6L15 9Z" fill="#e9e9e9" stroke="#555" stroke-width="0.9"/><path d="M12.6 0.4L6.4 6.6L9 7.2L5 12.6L13 7L10.2 6.2L15.6 1.4Z" fill="#f09a1a" stroke="#b85a0a" stroke-width="0.5"/><text x="15" y="19.4" font-family="Liberation Serif,serif" font-size="11" text-anchor="middle" fill="#2f7fc0">A</text></svg>
<svg style="left:1069px;top:127px" width="19" height="20" viewBox="0 0 19 20"><path d="M1 6L6.4 1H18V13.6L12.6 18.6H1Z" fill="#fafafa" stroke="#333" stroke-width="1"/><path d="M1 6H12.6V18.6M12.6 6L18 1" fill="none" stroke="#333" stroke-width="0.9"/><rect x="1" y="6" width="11.6" height="12.6" fill="#5fabdf" stroke="#1d5c8f" stroke-width="0.9"/><path d="M15.2 8V11M15.2 13V16" stroke="#333" stroke-width="0.8"/></svg>
<svg style="left:1109.5px;top:127px" width="19" height="20" viewBox="0 0 19 20"><path d="M1 4.4L8 1L18 4V15.6L9.6 19L1 15.6Z" fill="#f3f3f3" stroke="#5a5a5a" stroke-width="1"/><path d="M1 4.4L9.6 7.4V19L1 15.6Z" fill="#6fb6e4" stroke="#2a72ad" stroke-width="0.8"/><path d="M9.6 7.4L18 4" stroke="#5a5a5a" stroke-width="0.8"/></svg>
<svg style="left:1149.5px;top:127px" width="19" height="20" viewBox="0 0 19 20"><path d="M0.8 10Q9.2 1.4 18 10Q9.2 18.6 0.8 10Z" fill="#e4e4e4" stroke="#8a8a8a" stroke-width="1"/><circle cx="9.4" cy="10" r="4.4" fill="#9c9c9c" stroke="#6a6a6a" stroke-width="0.8"/><circle cx="9.4" cy="10" r="1.9" fill="#3a3a3a"/><path d="M9.4 2V18.6" stroke="#555" stroke-width="0.9"/></svg>
<svg style="left:1189px;top:126px" width="20" height="22" viewBox="0 0 20 22"><circle cx="9" cy="9" r="8" fill="#4b98d2"/><path d="M9 9L2 5Q5.6 0.6 11.6 1.6Z" fill="#e2483a"/><path d="M9 9L2.4 13.6Q6.4 18.6 12.6 16Z" fill="#3fae4a"/><path d="M9 9L16.6 11.6Q15 16 12.6 16Z" fill="#f0c83a"/><circle cx="9" cy="9" r="8" fill="none" stroke="#5a5a5a" stroke-width="0.7"/><path d="M8 20.6L9.4 16.4L16.6 8.4L19.2 10.8L12 18.6Z" fill="#f3d24a" stroke="#6a4a04" stroke-width="0.9"/><path d="M8 20.6L9.4 16.4L12 18.6Z" fill="#e9c9a0" stroke="#6a4a04" stroke-width="0.6"/></svg>
<svg style="left:1214.5px;top:126px" width="20" height="22" viewBox="0 0 20 22"><circle cx="9" cy="9" r="8" fill="#4b98d2"/><path d="M9 9L2 5Q5.6 0.6 11.6 1.6Z" fill="#e2483a"/><path d="M9 9L2.4 13.6Q6.4 18.6 12.6 16Z" fill="#3fae4a"/><path d="M9 9L16.6 11.6Q15 16 12.6 16Z" fill="#f0c83a"/><circle cx="9" cy="9" r="8" fill="none" stroke="#5a5a5a" stroke-width="0.7"/><rect x="0.6" y="14.6" width="17.8" height="6.4" fill="#333"/><path d="M2 16H4.6V17.6H2ZM6.6 16H9.2V17.6H6.6ZM11.2 16H13.8V17.6H11.2ZM4.2 18.6H6.8V20.2H4.2ZM8.8 18.6H11.4V20.2H8.8ZM13.4 18.6H16V20.2H13.4Z" fill="#eee"/></svg>
<svg style="left:1255px;top:129px" width="19" height="17" viewBox="0 0 19 17"><rect x="0.8" y="0.8" width="17.2" height="11.4" fill="#c9c9c9" stroke="#5a5a5a" stroke-width="1.2"/><rect x="2.4" y="2.4" width="14" height="8.2" fill="#e6e6e6"/><path d="M9.4 12.2V15M5.4 15.6H13.4" stroke="#4a4a4a" stroke-width="1.6"/></svg>
<svg style="left:1094.6000000000001px;top:135.2px" width="6.2" height="3.6" viewBox="0 0 6.2 3.6"><path d="M0 0H6.2L3.1 3.6Z" fill="#9a9a9a"/></svg>
<svg style="left:1134.5px;top:135.2px" width="6.2" height="3.6" viewBox="0 0 6.2 3.6"><path d="M0 0H6.2L3.1 3.6Z" fill="#9a9a9a"/></svg>
<svg style="left:1174.6000000000001px;top:135.2px" width="6.2" height="3.6" viewBox="0 0 6.2 3.6"><path d="M0 0H6.2L3.1 3.6Z" fill="#9a9a9a"/></svg>
<svg style="left:1240.7px;top:135.2px" width="6.2" height="3.6" viewBox="0 0 6.2 3.6"><path d="M0 0H6.2L3.1 3.6Z" fill="#9a9a9a"/></svg>
<svg style="left:1280.3000000000002px;top:135.2px" width="6.2" height="3.6" viewBox="0 0 6.2 3.6"><path d="M0 0H6.2L3.1 3.6Z" fill="#9a9a9a"/></svg>
<svg style="left:13.5px;top:183px" width="18" height="18" viewBox="0 0 18 18"><path d="M0.8 6.2L6.4 2.4L10 4.2V9L17.2 11V14L9 17.6L0.8 13Z" fill="#f4c920" stroke="#7a5c04" stroke-width="0.9" stroke-linejoin="round"/><path d="M0.8 6.2L9 10.6V17.6L0.8 13Z" fill="#e0a90e" stroke="#7a5c04" stroke-width="0.6"/><path d="M9 10.6V17.6L17.2 14V11Z" fill="#f7d64e" stroke="#7a5c04" stroke-width="0.6"/><path d="M7.6 6L12.4 3.4L17.2 6V11.4L12.4 14L7.6 11.4Z" fill="#6fb8e6" stroke="#1d5c8f" stroke-width="0.9" stroke-linejoin="round"/><path d="M7.6 6L12.4 3.4L17.2 6L12.4 8.6Z" fill="#b4dff6"/><path d="M12.4 8.6L17.2 6V11.4L12.4 14Z" fill="#3f97d3"/><path d="M7.6 6L12.4 8.6L17.2 6M12.4 8.6V14" fill="none" stroke="#1d5c8f" stroke-width="0.8"/></svg>
<svg style="left:52px;top:183px" width="19" height="18" viewBox="0 0 19 18"><rect x="0.9" y="0.9" width="17" height="16" fill="#fbfbfb" stroke="#222" stroke-width="1.3"/><rect x="0.9" y="0.9" width="17" height="2.8" fill="#4b98d2"/><rect x="3" y="5.4" width="3.6" height="2.4" fill="#3f8fce" stroke="#1d5c8f" stroke-width="0.6"/><rect x="3" y="9.2" width="3.6" height="2.4" fill="#3f8fce" stroke="#1d5c8f" stroke-width="0.6"/><rect x="3" y="13" width="3.6" height="2.4" fill="#3f8fce" stroke="#1d5c8f" stroke-width="0.6"/><path d="M8.4 6.6H15.6M8.4 10.4H15.6M8.4 14.2H15.6" stroke="#333" stroke-width="1"/></svg>
<svg style="left:94px;top:182.5px" width="16" height="19" viewBox="0 0 16 19"><path d="M2.4 1V17.4M2.4 4.4H6.4M2.4 12.6H8" fill="none" stroke="#222" stroke-width="1.3"/><rect x="0.8" y="0.8" width="3.4" height="17" fill="#fbfbfb" stroke="#222" stroke-width="1.1"/><rect x="6.4" y="1.6" width="5.4" height="5" rx="0.8" fill="#fbfbfb" stroke="#222" stroke-width="1.2"/><rect x="8.6" y="6.8" width="5.6" height="4.6" rx="0.8" fill="#fbfbfb" stroke="#222" stroke-width="1.2" transform="translate(-0.6 -0.4)"/><rect x="8.6" y="12" width="5.4" height="5" rx="0.8" fill="#fbfbfb" stroke="#222" stroke-width="1.2"/></svg>
<svg style="left:132px;top:183px" width="20" height="20" viewBox="0 0 20 20"><circle cx="10" cy="10" r="5.6" fill="none" stroke="#111" stroke-width="1.9"/><path d="M10 0.6V19.4M0.6 10H19.4" stroke="#111" stroke-width="1.7"/></svg>
<svg style="left:172px;top:182px" width="20" height="20" viewBox="0 0 20 20"><circle cx="10" cy="10" r="9" fill="#3f8fce"/><path d="M10 10L1.6 7Q4 1.6 10 1Q13 1 15.6 2.8Z" fill="#d8352a"/><path d="M10 10L1.8 13.4Q4.6 19 10 19Z" fill="#3aa646"/><path d="M10 10L10 19Q16 18.6 18.4 13Z" fill="#f1c21b"/><path d="M10 10L18.4 13Q19.6 9 18 6Z" fill="#e0742a"/><ellipse cx="13.4" cy="6.6" rx="4.4" ry="2.6" transform="rotate(40 13.4 6.6)" fill="#141414"/><circle cx="10" cy="10" r="9" fill="none" stroke="#7a5a2a" stroke-width="0.7"/></svg>
<svg style="left:8px;top:212px" width="20" height="20" viewBox="0 0 20 20"><path d="M1 2.6H16.4V4.4L10.2 11V17.6L7.4 19V11L1 4.4Z" fill="#f7f7f7" stroke="#333" stroke-width="1.1" stroke-linejoin="round"/><path d="M1 1.8H16.4V4.2H1Z" fill="#4b98d2" stroke="#1d5c8f" stroke-width="0.8"/></svg>
<svg style="left:25.8px;top:223.6px" width="5.4" height="3.2" viewBox="0 0 5.4 3.2"><path d="M0 0H5.4L2.7 3.2Z" fill="#333"/></svg>
<div class="a" style="left:1887px;top:181px;width:33px;height:179px;background:#d3d3d3;border-left:1px solid #a4a4a4;border-top:1px solid #a4a4a4;border-bottom:1px solid #a4a4a4;box-sizing:border-box;"></div>
<div class="a" style="left:1888px;top:182px;width:32px;height:28px;background:#fbfbfb;"></div>
<div class="a" style="left:1888px;top:210px;width:32px;height:1px;background:#a9a9a9;"></div>
<div class="a" style="left:1888px;top:240px;width:32px;height:1px;background:#a9a9a9;"></div>
<div class="a" style="left:1888px;top:270px;width:32px;height:1px;background:#a9a9a9;"></div>
<div class="a" style="left:1888px;top:300px;width:32px;height:1px;background:#a9a9a9;"></div>
<div class="a" style="left:1888px;top:330px;width:32px;height:1px;background:#a9a9a9;"></div>
<svg style="left:1894px;top:185px" width="20" height="20" viewBox="0 0 20 20"><path d="M3 9V18.4H17V9" fill="#fdfdfd" stroke="#222" stroke-width="1.4"/><path d="M8 18.4V12H12.4V18.4" fill="#fff" stroke="#222" stroke-width="1.2"/><rect x="10.4" y="14.6" width="1.3" height="1.6" fill="#222"/><path d="M1 10L10 1.4L19 10L17.6 11.4L10 4.2L2.4 11.4Z" fill="#2f7ab8" stroke="#184d7c" stroke-width="0.6"/></svg>
<svg style="left:1896px;top:215px" width="16" height="20" viewBox="0 0 16 20"><path d="M1 5.6L3.8 2L6.2 3.6L8.6 1.4L11 3L13 1L14.8 3.4V15.4L12 19L1 16.4Z" fill="#f4f4f4" stroke="#333" stroke-width="1.1" stroke-linejoin="round"/><path d="M4.4 6.4V17.2M7.8 6V18M11.2 5.6V18.6" stroke="#333" stroke-width="1"/><path d="M1 5.6L4.4 6.4L6.2 3.6M4.4 6.4L7.8 6L8.6 1.4M7.8 6L11.2 5.6L13 1M11.2 5.6L14.8 3.4" fill="none" stroke="#333" stroke-width="0.8"/></svg>
<svg style="left:1893px;top:246px" width="22" height="18" viewBox="0 0 22 18"><path d="M1.2 16.6V2.4H7L8.6 4.6H15.4V7" fill="#cfcfcf" stroke="#333" stroke-width="1.2"/><path d="M1.2 16.6L5.4 7H20.6L16.4 16.6Z" fill="#fafafa" stroke="#333" stroke-width="1.2"/></svg>
<svg style="left:1896px;top:276px" width="18" height="18" viewBox="0 0 18 18"><rect x="0.8" y="0.8" width="16.4" height="16.4" rx="1.6" fill="#f4f0e4" stroke="#222" stroke-width="1.3"/><rect x="3" y="3.2" width="4.6" height="2.6" fill="#f1c21b" stroke="#7a5c04" stroke-width="0.6"/><rect x="9.6" y="3.2" width="3" height="2.6" fill="#f1c21b" stroke="#7a5c04" stroke-width="0.6"/><path d="M6.4 7.6H10.4V11H13.4V14.4H3V11H6.4Z" fill="#f1c21b" stroke="#7a5c04" stroke-width="0.7"/><rect x="14" y="8" width="2" height="7" fill="#d8d8d8" stroke="#555" stroke-width="0.5"/></svg>
<svg style="left:1895.5px;top:306px" width="18" height="18" viewBox="0 0 18 18"><circle cx="9" cy="9" r="8.2" fill="#3f8fce"/><path d="M9 9L1.4 6Q4 1 9.6 0.8Z" fill="#d8352a"/><path d="M9 9L1.6 12.4Q4.4 17.6 9.6 17.2Z" fill="#3aa646"/><path d="M9 9L9.6 17.2Q15 16.6 17 11.6Z" fill="#f1c21b"/><circle cx="6.4" cy="5.6" r="2.6" fill="#fff" opacity="0.35"/><circle cx="9" cy="9" r="8.2" fill="none" stroke="#6a5a3a" stroke-width="0.7"/></svg>
<svg style="left:1895px;top:336px" width="19" height="18" viewBox="0 0 19 18"><rect x="0.9" y="0.9" width="17" height="16" fill="#fbfbfb" stroke="#222" stroke-width="1.3"/><rect x="0.9" y="0.9" width="17" height="2.8" fill="#4b98d2"/><rect x="3" y="5.4" width="3.6" height="2.4" fill="#3f8fce" stroke="#1d5c8f" stroke-width="0.6"/><rect x="3" y="9.2" width="3.6" height="2.4" fill="#3f8fce" stroke="#1d5c8f" stroke-width="0.6"/><rect x="3" y="13" width="3.6" height="2.4" fill="#3f8fce" stroke="#1d5c8f" stroke-width="0.6"/><path d="M8.4 6.6H15.6M8.4 10.4H15.6M8.4 14.2H15.6" stroke="#333" stroke-width="1"/></svg>
<svg style="left:240px;top:915px" width="90" height="70" viewBox="0 0 90 70"><path d="M41.7 54.2V31" stroke="#8fe694" stroke-width="3.6"/><path d="M37.4 31.6L41.7 20L46 31.6Z" fill="#46c657"/><ellipse cx="41.7" cy="30.6" rx="4.4" ry="1.5" fill="#1f9a30"/><path d="M41.7 54.2L21.5 49.4" stroke="#e00808" stroke-width="4"/><path d="M22.6 45.6L14.2 47L20.6 53.2Z" fill="#d40808"/><path d="M21.2 45.4L22.6 53.4" stroke="#fdfdfb" stroke-width="1"/><path d="M41.7 54.2L58.6 47.8" stroke="#1414c4" stroke-width="4"/><path d="M57.2 44.4L65.4 45.3L60 51.2Z" fill="#1010b0"/><path d="M57.8 44L60 51.6" stroke="#fdfdfb" stroke-width="1"/><path d="M39.9 49.6H43.5V55.4L41.7 56.2L39.9 55.4Z" fill="#18a828"/><text x="43.6" y="11.8" font-family="Liberation Sans,sans-serif" font-size="9" text-anchor="middle" fill="#52d25e">Y</text><text x="9.4" y="44" font-family="Liberation Sans,sans-serif" font-size="9" text-anchor="middle" fill="#e25a46">X</text><text x="72" y="41.9" font-family="Liberation Sans,sans-serif" font-size="9" text-anchor="middle" fill="#2222c0">Z</text></svg>
<svg style="left:556px;top:337px" width="14" height="21" viewBox="0 0 14 21"><path d="M1.6 1.4V16.4L5.2 13L8 19.4L10.4 18.4L7.6 12.2L12.6 12Z" fill="#fff" stroke="#111" stroke-width="1.1" stroke-linejoin="round"/></svg>
<svg style="left:1900px;top:1062px" width="19" height="17" viewBox="0 0 19 17"><path d="M1 6.4L11 1L18 5.4V8.6L8.4 15.6L1 10Z" fill="#f0f0f0" stroke="#333" stroke-width="1.1" stroke-linejoin="round"/><path d="M1 6.4L8.4 12V15.6M8.4 12L18 5.4" fill="none" stroke="#333" stroke-width="0.9"/><ellipse cx="10" cy="6" rx="3" ry="1.7" transform="rotate(-25 10 6)" fill="none" stroke="#333" stroke-width="0.9"/></svg>
</div>
<div id="tree">
<svg style="left:5px;top:240.29999999999998px" width="18" height="18" viewBox="0 0 18 18"><path d="M0.8 6.2L6.4 2.4L10 4.2V9L17.2 11V14L9 17.6L0.8 13Z" fill="#f4c920" stroke="#7a5c04" stroke-width="0.9" stroke-linejoin="round"/><path d="M0.8 6.2L9 10.6V17.6L0.8 13Z" fill="#e0a90e" stroke="#7a5c04" stroke-width="0.6"/><path d="M9 10.6V17.6L17.2 14V11Z" fill="#f7d64e" stroke="#7a5c04" stroke-width="0.6"/><path d="M7.6 6L12.4 3.4L17.2 6V11.4L12.4 14L7.6 11.4Z" fill="#6fb8e6" stroke="#1d5c8f" stroke-width="0.9" stroke-linejoin="round"/><path d="M7.6 6L12.4 3.4L17.2 6L12.4 8.6Z" fill="#b4dff6"/><path d="M12.4 8.6L17.2 6V11.4L12.4 14Z" fill="#3f97d3"/><path d="M7.6 6L12.4 8.6L17.2 6M12.4 8.6V14" fill="none" stroke="#1d5c8f" stroke-width="0.8"/></svg>
<div class="t" style="left:27.00px;top:241.01px;font-size:14.7px;line-height:19px;transform:scaleX(1.0384);color:#111;">Control Module  (Default)</div>
<svg style="left:10px;top:269.3px" width="5" height="8" viewBox="0 0 5 8"><path d="M0.3 0.3L4.6 4L0.3 7.7Z" fill="#7a7a7a"/></svg>
<svg style="left:26.5px;top:264.3px" width="18" height="18" viewBox="0 0 18 18"><path d="M0.7 16.3V2.2Q0.7 1.2 1.7 1.2H6L7.6 3.2H16.3Q17.3 3.2 17.3 4.2V16.3Z" fill="#dedede" stroke="#555" stroke-width="1"/><path d="M0.7 16.3V5.8H17.3V16.3Z" fill="#f4f4f4" stroke="#555" stroke-width="1"/><path d="M1 16.9H17" stroke="#999" stroke-width="0.9"/><circle cx="10.3" cy="11" r="3.8" fill="#fff" stroke="#333" stroke-width="0.9"/><path d="M10.3 8.8V11L12.4 11.8" stroke="#333" stroke-width="0.8" fill="none"/><path d="M3.2 11.5Q5 15 8.5 14.2L7.9 12.6L5.6 12.4L6 10.4Z" fill="#2f7fc0"/></svg>
<div class="t" style="left:50.60px;top:265.01px;font-size:14.7px;line-height:19px;transform:scaleX(1.0149);color:#111;">History</div>
<svg style="left:26.5px;top:288.3px" width="18" height="18" viewBox="0 0 18 18"><path d="M0.7 16.3V2.2Q0.7 1.2 1.7 1.2H6L7.6 3.2H16.3Q17.3 3.2 17.3 4.2V16.3Z" fill="#dedede" stroke="#555" stroke-width="1"/><path d="M0.7 16.3V5.8H17.3V16.3Z" fill="#f4f4f4" stroke="#555" stroke-width="1"/><path d="M1 16.9H17" stroke="#999" stroke-width="0.9"/><circle cx="9.5" cy="11" r="4" fill="#fff" stroke="#333" stroke-width="1"/><path d="M9.5 11L12 8.6" stroke="#333" stroke-width="1"/><path d="M11 14.6A4 4 0 0 0 13.4 11.8L11.3 11.6Z" fill="#e03a2e"/><path d="M7.6 9L8.6 10" stroke="#2f7fc0" stroke-width="1"/></svg>
<div class="t" style="left:50.60px;top:289.01px;font-size:14.7px;line-height:19px;transform:scaleX(0.9157);color:#111;">Sensors</div>
<svg style="left:10px;top:317.3px" width="5" height="8" viewBox="0 0 5 8"><path d="M0.3 0.3L4.6 4L0.3 7.7Z" fill="#7a7a7a"/></svg>
<svg style="left:26.5px;top:312.3px" width="18" height="18" viewBox="0 0 18 18"><path d="M0.7 16.3V2.2Q0.7 1.2 1.7 1.2H6L7.6 3.2H16.3Q17.3 3.2 17.3 4.2V16.3Z" fill="#dedede" stroke="#555" stroke-width="1"/><path d="M0.7 16.3V5.8H17.3V16.3Z" fill="#f4f4f4" stroke="#555" stroke-width="1"/><path d="M1 16.9H17" stroke="#999" stroke-width="0.9"/><text x="9" y="15.3" font-family="Liberation Serif,serif" font-weight="700" font-size="11.5" text-anchor="middle" fill="#2b74b0">A</text></svg>
<div class="t" style="left:50.60px;top:313.01px;font-size:14.7px;line-height:19px;transform:scaleX(1.0230);color:#111;">Annotations</div>
<svg style="left:26.5px;top:336.3px" width="18" height="18" viewBox="0 0 18 18"><path d="M0.7 16.3V2.2Q0.7 1.2 1.7 1.2H6L7.6 3.2H16.3Q17.3 3.2 17.3 4.2V16.3Z" fill="#dedede" stroke="#555" stroke-width="1"/><path d="M0.7 16.3V5.8H17.3V16.3Z" fill="#f4f4f4" stroke="#555" stroke-width="1"/><path d="M1 16.9H17" stroke="#999" stroke-width="0.9"/><text x="9" y="14.9" font-family="Liberation Serif,serif" font-weight="700" font-size="11" text-anchor="middle" fill="#222">Σ</text></svg>
<div class="t" style="left:50.60px;top:337.01px;font-size:14.7px;line-height:19px;transform:scaleX(0.9799);color:#111;">Equations</div>
<svg style="left:27.0px;top:359.3px" width="18" height="20" viewBox="0 0 18 20"><path d="M3 4.6L15.5 1.9V15L3 18.2Z" fill="none" stroke="#3c3c3c" stroke-width="1"/><path d="M9.2 0.5V20" stroke="#222" stroke-width="1" stroke-dasharray="3.2 1.6" fill="none"/></svg>
<div class="t" style="left:50.60px;top:361.01px;font-size:14.7px;line-height:19px;transform:scaleX(0.9619);color:#111;">Front Plane</div>
<svg style="left:27.0px;top:383.3px" width="18" height="20" viewBox="0 0 18 20"><path d="M3 4.6L15.5 1.9V15L3 18.2Z" fill="none" stroke="#3c3c3c" stroke-width="1"/><path d="M9.2 0.5V20" stroke="#222" stroke-width="1" stroke-dasharray="3.2 1.6" fill="none"/></svg>
<div class="t" style="left:50.60px;top:385.01px;font-size:14.7px;line-height:19px;transform:scaleX(0.9937);color:#111;">Top Plane</div>
<svg style="left:27.0px;top:407.3px" width="18" height="20" viewBox="0 0 18 20"><path d="M3 4.6L15.5 1.9V15L3 18.2Z" fill="none" stroke="#3c3c3c" stroke-width="1"/><path d="M9.2 0.5V20" stroke="#222" stroke-width="1" stroke-dasharray="3.2 1.6" fill="none"/></svg>
<div class="t" style="left:50.60px;top:409.01px;font-size:14.7px;line-height:19px;transform:scaleX(0.9750);color:#111;">Right Plane</div>
<svg style="left:26.5px;top:432.3px" width="19" height="18" viewBox="0 0 19 18"><path d="M3 16.5V2.5M3 16.5H16" stroke="#222" stroke-width="1.5" fill="none"/><path d="M0.6 4.6L3 0.3L5.4 4.6ZM14.2 14.1L18.5 16.5L14.2 18.9Z" fill="#222"/><rect x="1.4" y="14.9" width="3.2" height="3.2" fill="#222"/></svg>
<div class="t" style="left:50.60px;top:433.01px;font-size:14.7px;line-height:19px;transform:scaleX(1.0242);color:#111;">Origin</div>
<svg style="left:27.0px;top:455.3px" width="18" height="20" viewBox="0 0 18 20"><path d="M3 4.6L15.5 1.9V15L3 18.2Z" fill="#4b96cf" stroke="#1c5a86" stroke-width="1"/><path d="M9.2 0.5V20" stroke="#222" stroke-width="1" stroke-dasharray="3.2 1.6" fill="none"/></svg>
<div class="t" style="left:50.60px;top:457.01px;font-size:14.7px;line-height:19px;transform:scaleX(0.9738);color:#111;">Symmetry Plane</div>
<svg style="left:26.5px;top:480.3px" width="18" height="18" viewBox="0 0 18 18"><path d="M1.2 6.8L5.5 3.2Q7.5 1.5 9.8 3L10.5 3.6V7.6L16.8 10.8V14.4L9.2 17.4L1.2 12.8Z" fill="#fbfbfb" stroke="#4a4a4a" stroke-width="1.1" stroke-linejoin="round"/><path d="M1.2 6.8L5.6 9V5.2Q7.5 3.6 10.5 3.6M5.6 9L9.2 11V17.4M9.2 11L12 9.6L10.5 7.6M12 9.6L16.8 10.8" fill="none" stroke="#4a4a4a" stroke-width="1" stroke-linejoin="round"/></svg>
<div class="t" style="left:50.60px;top:481.01px;font-size:14.7px;line-height:19px;transform:scaleX(1.0134);color:#111;width:174.9px;overflow:hidden;">Control Module Shell, Bottom&lt;1&gt;</div>
<svg style="left:26.5px;top:504.30000000000007px" width="18" height="18" viewBox="0 0 18 18"><path d="M1.2 6.8L5.5 3.2Q7.5 1.5 9.8 3L10.5 3.6V7.6L16.8 10.8V14.4L9.2 17.4L1.2 12.8Z" fill="#fbfbfb" stroke="#4a4a4a" stroke-width="1.1" stroke-linejoin="round"/><path d="M1.2 6.8L5.6 9V5.2Q7.5 3.6 10.5 3.6M5.6 9L9.2 11V17.4M9.2 11L12 9.6L10.5 7.6M12 9.6L16.8 10.8" fill="none" stroke="#4a4a4a" stroke-width="1" stroke-linejoin="round"/></svg>
<div class="t" style="left:50.60px;top:505.01px;font-size:14.7px;line-height:19px;transform:scaleX(1.0214);color:#111;width:173.5px;overflow:hidden;">Control Module Shell, Top&lt;1&gt;</div>
<svg style="left:26.5px;top:528.3000000000001px" width="18" height="18" viewBox="0 0 18 18"><path d="M1.2 6.8L5.5 3.2Q7.5 1.5 9.8 3L10.5 3.6V7.6L16.8 10.8V14.4L9.2 17.4L1.2 12.8Z" fill="#fbfbfb" stroke="#4a4a4a" stroke-width="1.1" stroke-linejoin="round"/><path d="M1.2 6.8L5.6 9V5.2Q7.5 3.6 10.5 3.6M5.6 9L9.2 11V17.4M9.2 11L12 9.6L10.5 7.6M12 9.6L16.8 10.8" fill="none" stroke="#4a4a4a" stroke-width="1" stroke-linejoin="round"/></svg>
<div class="t" style="left:50.60px;top:529.01px;font-size:14.7px;line-height:19px;transform:scaleX(1.0048);color:#111;width:176.3px;overflow:hidden;">Control Module Shell, Wire&lt;1&gt;</div>
<svg style="left:26.5px;top:552.3000000000001px" width="18" height="18" viewBox="0 0 18 18"><path d="M1.2 6.8L5.5 3.2Q7.5 1.5 9.8 3L10.5 3.6V7.6L16.8 10.8V14.4L9.2 17.4L1.2 12.8Z" fill="#fbfbfb" stroke="#4a4a4a" stroke-width="1.1" stroke-linejoin="round"/><path d="M1.2 6.8L5.6 9V5.2Q7.5 3.6 10.5 3.6M5.6 9L9.2 11V17.4M9.2 11L12 9.6L10.5 7.6M12 9.6L16.8 10.8" fill="none" stroke="#4a4a4a" stroke-width="1" stroke-linejoin="round"/></svg>
<div class="t" style="left:50.60px;top:553.01px;font-size:14.7px;line-height:19px;transform:scaleX(1.0552);color:#111;width:167.9px;overflow:hidden;">(-) Control Module Motor Housing</div>
<svg style="left:10px;top:581.3000000000001px" width="5" height="8" viewBox="0 0 5 8"><path d="M0.3 0.3L4.6 4L0.3 7.7Z" fill="#7a7a7a"/></svg>
<svg style="left:26.5px;top:576.3000000000001px" width="18" height="18" viewBox="0 0 18 18"><path d="M1 6.5L6 3.5L10.5 5.5V8L17 11V14L9 17.5L1 13Z" fill="#f2c31c" stroke="#7a5c04" stroke-width="0.9"/><path d="M1 6.5L9 10.5V17.5L1 13Z" fill="#dfa60c" stroke="#7a5c04" stroke-width="0.6"/><path d="M6 3.5L10.5 5.5V8L5.5 5.8Z" fill="#fae07a" stroke="#7a5c04" stroke-width="0.5"/><path d="M9 10.5L10.5 8L17 11V14L9 17.5Z" fill="#f7d54c" stroke="#7a5c04" stroke-width="0.6"/></svg>
<div class="t" style="left:50.60px;top:577.01px;font-size:14.7px;line-height:19px;transform:scaleX(0.9877);color:#111;width:179.4px;overflow:hidden;">Control Module PCB Cover &lt;1&gt;</div>
<svg style="left:10px;top:605.3000000000001px" width="5" height="8" viewBox="0 0 5 8"><path d="M0.3 0.3L4.6 4L0.3 7.7Z" fill="#7a7a7a"/></svg>
<svg style="left:26.5px;top:600.3000000000001px" width="18" height="18" viewBox="0 0 18 18"><path d="M0.8 6.2L6.4 2.4L10 4.2V9L17.2 11V14L9 17.6L0.8 13Z" fill="#f4c920" stroke="#7a5c04" stroke-width="0.9" stroke-linejoin="round"/><path d="M0.8 6.2L9 10.6V17.6L0.8 13Z" fill="#e0a90e" stroke="#7a5c04" stroke-width="0.6"/><path d="M9 10.6V17.6L17.2 14V11Z" fill="#f7d64e" stroke="#7a5c04" stroke-width="0.6"/><path d="M7.6 6L12.4 3.4L17.2 6V11.4L12.4 14L7.6 11.4Z" fill="#6fb8e6" stroke="#1d5c8f" stroke-width="0.9" stroke-linejoin="round"/><path d="M7.6 6L12.4 3.4L17.2 6L12.4 8.6Z" fill="#b4dff6"/><path d="M12.4 8.6L17.2 6V11.4L12.4 14Z" fill="#3f97d3"/><path d="M7.6 6L12.4 8.6L17.2 6M12.4 8.6V14" fill="none" stroke="#1d5c8f" stroke-width="0.8"/></svg>
<div class="t" style="left:50.60px;top:601.01px;font-size:14.7px;line-height:19px;transform:scaleX(1.0318);color:#111;width:171.7px;overflow:hidden;">Control Module Eject Button</div>
<svg style="left:10px;top:629.3000000000001px" width="5" height="8" viewBox="0 0 5 8"><path d="M0.3 0.3L4.6 4L0.3 7.7Z" fill="#7a7a7a"/></svg>
<svg style="left:26.5px;top:624.3000000000001px" width="18" height="18" viewBox="0 0 18 18"><path d="M0.8 6.2L6.4 2.4L10 4.2V9L17.2 11V14L9 17.6L0.8 13Z" fill="#f4c920" stroke="#7a5c04" stroke-width="0.9" stroke-linejoin="round"/><path d="M0.8 6.2L9 10.6V17.6L0.8 13Z" fill="#e0a90e" stroke="#7a5c04" stroke-width="0.6"/><path d="M9 10.6V17.6L17.2 14V11Z" fill="#f7d64e" stroke="#7a5c04" stroke-width="0.6"/><path d="M7.6 6L12.4 3.4L17.2 6V11.4L12.4 14L7.6 11.4Z" fill="#6fb8e6" stroke="#1d5c8f" stroke-width="0.9" stroke-linejoin="round"/><path d="M7.6 6L12.4 3.4L17.2 6L12.4 8.6Z" fill="#b4dff6"/><path d="M12.4 8.6L17.2 6V11.4L12.4 14Z" fill="#3f97d3"/><path d="M7.6 6L12.4 8.6L17.2 6M12.4 8.6V14" fill="none" stroke="#1d5c8f" stroke-width="0.8"/></svg>
<div class="t" style="left:50.60px;top:625.01px;font-size:14.7px;line-height:19px;transform:scaleX(1.0217);color:#111;width:173.4px;overflow:hidden;">Control Module Battery Door</div>
<svg style="left:10px;top:653.3000000000001px" width="5" height="8" viewBox="0 0 5 8"><path d="M0.3 0.3L4.6 4L0.3 7.7Z" fill="#7a7a7a"/></svg>
<svg style="left:26.5px;top:648.3000000000001px" width="18" height="18" viewBox="0 0 18 18"><path d="M0.8 6.2L6.4 2.4L10 4.2V9L17.2 11V14L9 17.6L0.8 13Z" fill="#f4c920" stroke="#7a5c04" stroke-width="0.9" stroke-linejoin="round"/><path d="M0.8 6.2L9 10.6V17.6L0.8 13Z" fill="#e0a90e" stroke="#7a5c04" stroke-width="0.6"/><path d="M9 10.6V17.6L17.2 14V11Z" fill="#f7d64e" stroke="#7a5c04" stroke-width="0.6"/><path d="M7.6 6L12.4 3.4L17.2 6V11.4L12.4 14L7.6 11.4Z" fill="#6fb8e6" stroke="#1d5c8f" stroke-width="0.9" stroke-linejoin="round"/><path d="M7.6 6L12.4 3.4L17.2 6L12.4 8.6Z" fill="#b4dff6"/><path d="M12.4 8.6L17.2 6V11.4L12.4 14Z" fill="#3f97d3"/><path d="M7.6 6L12.4 8.6L17.2 6M12.4 8.6V14" fill="none" stroke="#1d5c8f" stroke-width="0.8"/></svg>
<div class="t" style="left:50.60px;top:649.01px;font-size:14.7px;line-height:19px;transform:scaleX(1.0175);color:#111;width:174.1px;overflow:hidden;">Control Module Drive Assembly</div>
<svg style="left:10px;top:677.3000000000001px" width="5" height="8" viewBox="0 0 5 8"><path d="M0.3 0.3L4.6 4L0.3 7.7Z" fill="#7a7a7a"/></svg>
<svg style="left:26.5px;top:672.3000000000001px" width="18" height="18" viewBox="0 0 18 18"><path d="M0.8 6.2L6.4 2.4L10 4.2V9L17.2 11V14L9 17.6L0.8 13Z" fill="#f4c920" stroke="#7a5c04" stroke-width="0.9" stroke-linejoin="round"/><path d="M0.8 6.2L9 10.6V17.6L0.8 13Z" fill="#e0a90e" stroke="#7a5c04" stroke-width="0.6"/><path d="M9 10.6V17.6L17.2 14V11Z" fill="#f7d64e" stroke="#7a5c04" stroke-width="0.6"/><path d="M7.6 6L12.4 3.4L17.2 6V11.4L12.4 14L7.6 11.4Z" fill="#6fb8e6" stroke="#1d5c8f" stroke-width="0.9" stroke-linejoin="round"/><path d="M7.6 6L12.4 3.4L17.2 6L12.4 8.6Z" fill="#b4dff6"/><path d="M12.4 8.6L17.2 6V11.4L12.4 14Z" fill="#3f97d3"/><path d="M7.6 6L12.4 8.6L17.2 6M12.4 8.6V14" fill="none" stroke="#1d5c8f" stroke-width="0.8"/></svg>
<div class="t" style="left:50.60px;top:673.01px;font-size:14.7px;line-height:19px;transform:scaleX(0.9700);color:#111;width:182.7px;overflow:hidden;">User Interface PCB Board Assembly</div>
<svg style="left:10px;top:701.3000000000001px" width="5" height="8" viewBox="0 0 5 8"><path d="M0.3 0.3L4.6 4L0.3 7.7Z" fill="#7a7a7a"/></svg>
<svg style="left:26.5px;top:696.3000000000001px" width="18" height="18" viewBox="0 0 18 18"><path d="M1 6.5L6 3.5L10.5 5.5V8L17 11V14L9 17.5L1 13Z" fill="#f2c31c" stroke="#7a5c04" stroke-width="0.9"/><path d="M1 6.5L9 10.5V17.5L1 13Z" fill="#dfa60c" stroke="#7a5c04" stroke-width="0.6"/><path d="M6 3.5L10.5 5.5V8L5.5 5.8Z" fill="#fae07a" stroke="#7a5c04" stroke-width="0.5"/><path d="M9 10.5L10.5 8L17 11V14L9 17.5Z" fill="#f7d54c" stroke="#7a5c04" stroke-width="0.6"/></svg>
<div class="t" style="left:50.60px;top:697.01px;font-size:14.7px;line-height:19px;transform:scaleX(0.9905);color:#111;width:178.9px;overflow:hidden;">(-) Battery Retainer Bracket&lt;1&gt;</div>
<svg style="left:10px;top:725.3000000000001px" width="5" height="8" viewBox="0 0 5 8"><path d="M0.3 0.3L4.6 4L0.3 7.7Z" fill="#7a7a7a"/></svg>
<svg style="left:26.5px;top:720.3000000000001px" width="18" height="18" viewBox="0 0 18 18"><path d="M0.7 16.8V1.6H6L7.6 3.4H17.3V16.8Z" fill="#9fd0ee" stroke="#1d5c8f" stroke-width="1"/><path d="M1.3 16.2V6.2H16.7Z" fill="#2f86c9"/><path d="M1.3 16.2L16.7 4.2V16.2Z" fill="#eaf5fc"/></svg>
<div class="t" style="left:50.60px;top:721.01px;font-size:14.7px;line-height:19px;transform:scaleX(0.9794);color:#111;">Electronics</div>
<svg style="left:10px;top:749.3000000000001px" width="5" height="8" viewBox="0 0 5 8"><path d="M0.3 0.3L4.6 4L0.3 7.7Z" fill="#7a7a7a"/></svg>
<svg style="left:26.5px;top:744.3000000000001px" width="18" height="18" viewBox="0 0 18 18"><path d="M0.7 16.8V1.6H6L7.6 3.4H17.3V16.8Z" fill="#c9c9c9" stroke="#555" stroke-width="1"/><path d="M1.3 16.2V6.2H16.7Z" fill="#bdbdbd"/><path d="M1.3 16.2L16.7 4.2V16.2Z" fill="#f6f6f6"/></svg>
<div class="t" style="left:50.60px;top:745.01px;font-size:14.7px;line-height:19px;transform:scaleX(1.0028);color:#111;">Hardware</div>
<svg style="left:10px;top:773.3000000000001px" width="5" height="8" viewBox="0 0 5 8"><path d="M0.3 0.3L4.6 4L0.3 7.7Z" fill="#7a7a7a"/></svg>
<svg style="left:26.5px;top:768.3000000000001px" width="18" height="18" viewBox="0 0 18 18"><path d="M2.2 13.5V5Q2.2 2 4.6 2Q7 2 7 5V14Q7 16 5.6 16Q4.2 16 4.2 14V6.5" fill="none" stroke="#2a72ad" stroke-width="1.1"/><path d="M10.2 13.5V5Q10.2 2 12.6 2Q15 2 15 5V14Q15 16 13.6 16Q12.2 16 12.2 14V6.5" fill="none" stroke="#2a72ad" stroke-width="1.1"/></svg>
<div class="t" style="left:50.60px;top:769.01px;font-size:14.7px;line-height:19px;transform:scaleX(0.9836);color:#111;">Mates</div>
</div>
<svg id="model" style="left:0;top:0" width="1920" height="1080" viewBox="0 0 1920 1080">
<defs>
<linearGradient id="gHandle" x1="0.4" y1="0" x2="0.5" y2="1"><stop offset="0" stop-color="#626262"/><stop offset="0.45" stop-color="#77777a"/><stop offset="1" stop-color="#585858"/></linearGradient>
<linearGradient id="gRoller" x1="0" y1="0" x2="0.25" y2="1"><stop offset="0" stop-color="#9a9a9a"/><stop offset="0.45" stop-color="#f0f0f0"/><stop offset="1" stop-color="#a8a8a8"/></linearGradient>
<linearGradient id="gOrange" x1="0" y1="0" x2="0.3" y2="1"><stop offset="0" stop-color="#8a5210"/><stop offset="0.35" stop-color="#d28a2a"/><stop offset="1" stop-color="#7a4508"/></linearGradient>
<linearGradient id="gWhiteCyl" x1="0" y1="0" x2="0.3" y2="1"><stop offset="0" stop-color="#c9c5bd"/><stop offset="0.4" stop-color="#fbf9f4"/><stop offset="1" stop-color="#b9b5ad"/></linearGradient>
<linearGradient id="gPulleySide" x1="0" y1="0" x2="1" y2="1"><stop offset="0" stop-color="#787d90"/><stop offset="0.45" stop-color="#9fa4b6"/><stop offset="0.7" stop-color="#a8adbe"/><stop offset="1" stop-color="#74798c"/></linearGradient>
<linearGradient id="gPulleyFace" x1="0" y1="0" x2="1" y2="1"><stop offset="0" stop-color="#7e8291"/><stop offset="1" stop-color="#777b8b"/></linearGradient>
<linearGradient id="gPlate" x1="0" y1="1" x2="1" y2="0"><stop offset="0" stop-color="#8c8c8c"/><stop offset="0.5" stop-color="#898a8a"/><stop offset="1" stop-color="#949494"/></linearGradient>
<linearGradient id="gSilver" x1="0" y1="0" x2="0" y2="1"><stop offset="0" stop-color="#eef0f8"/><stop offset="1" stop-color="#aab0c6"/></linearGradient>
<linearGradient id="gBelt" x1="0" y1="0" x2="1" y2="0"><stop offset="0" stop-color="#3a3a3a"/><stop offset="1" stop-color="#555"/></linearGradient>
<linearGradient id="gHole" x1="0" y1="1" x2="1" y2="0"><stop offset="0" stop-color="#ffffff"/><stop offset="0.55" stop-color="#d9ddec"/><stop offset="1" stop-color="#9a9fb6"/></linearGradient>
<linearGradient id="gBeltV" gradientUnits="userSpaceOnUse" x1="0" y1="630" x2="0" y2="885"><stop offset="0" stop-color="#2e2e2e"/><stop offset="0.35" stop-color="#272828"/><stop offset="0.62" stop-color="#3c3c3c"/><stop offset="1" stop-color="#5c5c5c"/></linearGradient>
<linearGradient id="gBeltR" gradientUnits="userSpaceOnUse" x1="0" y1="630" x2="0" y2="885"><stop offset="0" stop-color="#1c1c1c"/><stop offset="0.35" stop-color="#181818"/><stop offset="0.62" stop-color="#262626"/><stop offset="1" stop-color="#383838"/></linearGradient>
</defs>
<g id="ui-pcb">
<path d="M897 302Q897 290 905 286.5L959 267.5L957.5 686L910 704.5L897 702L892.5 696Z" fill="#0a3d12" stroke="#0e0e0e" stroke-width="1.2" stroke-linejoin="round" />
<path d="M904.5 293Q905 288.5 909 287L959 268.5V303L957.5 686L903 703.5Q901 702 901 699Z" fill="#08590f" stroke="#062a0b" stroke-width="0.8" stroke-linejoin="round" />
<path d="M898 301Q898.5 291 905.5 287.5L912 285.2" fill="none" stroke="#3fb54c" stroke-width="1.6" stroke-linejoin="round" />
</g>
<g id="housing">
<polygon points="973.0,292.0 1106.7,285.4 1113.3,287.5 1121.7,290.0 1128.3,294.2 1134.2,300.8 1138.3,309.2 1140.0,319.2 1140.8,330.0 1143.0,410.0 1147.0,517.0 1149.0,580.0 1149.0,616.0 1060.0,616.0 1060.0,560.0 978.0,560.0 977.0,363.0" fill="#5d5d5d" stroke="#0e0e0e" stroke-width="1.2" stroke-linejoin="round" />
<path d="M1100 300L1116.7 291.7Q1132 300 1135.8 315L1139 410L1098 410Z" fill="#646464" stroke="none" stroke-width="0" stroke-linejoin="round" />
<path d="M1116.7 291.7L1125.8 297.5L1132.5 305.8L1135.8 315L1138.3 410" fill="none" stroke="#2a2a2a" stroke-width="1" stroke-linejoin="round" />
<polygon points="978.0,380.0 1136.0,412.0 1138.0,480.0 978.0,450.0" fill="#636364" stroke="none" stroke-width="0" stroke-linejoin="round" />
<polygon points="966.0,377.0 979.0,370.5 1010.0,378.0 1052.0,390.0 1092.0,402.0 1134.0,412.0 1122.0,417.0 1092.0,410.0 1052.0,398.0 1010.0,386.0 984.0,381.0" fill="#b4b4b4" stroke="#0e0e0e" stroke-width="0.8" stroke-linejoin="round" />
<polygon points="966.0,447.0 987.0,440.0 1010.0,447.0 1052.0,459.0 1078.0,467.0 1078.0,474.0 1052.0,467.0 1010.0,455.0 988.0,451.0" fill="#b0b0b0" stroke="#0e0e0e" stroke-width="0.8" stroke-linejoin="round" />
<polygon points="1009.0,312.0 1016.5,312.0 1019.5,466.0 1011.7,466.0" fill="#727272" stroke="#080808" stroke-width="1.25" stroke-linejoin="round" />
<polygon points="1050.0,322.0 1058.0,322.0 1061.5,478.0 1053.0,478.0" fill="#727272" stroke="#080808" stroke-width="1.25" stroke-linejoin="round" />
<polygon points="1090.0,308.0 1098.0,308.0 1101.5,440.0 1092.5,440.0" fill="#727272" stroke="#080808" stroke-width="1.25" stroke-linejoin="round" />
</g>
<g id="handle">
<path d="M938.5 259L946 266L952.5 269L1040.8 294.5L1063.3 298L1088 295L1103 287L1103 298L1088 306.5L1063 309.5L1040 306L952.5 280.5L944 277L939 270Z" fill="#343434" stroke="#0e0e0e" stroke-width="1" stroke-linejoin="round" />
<path d="M937.1 257.0C937.5 255.3 938.5 253.7 940.0 252.0C941.5 250.3 943.4 248.6 945.8 247.0C948.2 245.4 950.7 243.6 954.2 242.4C957.7 241.2 962.5 240.3 966.7 240.0C970.9 239.7 975.0 240.0 979.2 240.3C983.4 240.6 986.9 241.0 991.7 242.0C996.6 243.0 1002.8 244.8 1008.3 246.2C1013.8 247.6 1018.6 248.9 1025.0 250.5C1031.4 252.1 1040.3 254.1 1046.7 255.8C1053.1 257.5 1057.8 259.0 1063.3 260.8C1068.8 262.6 1075.1 264.9 1080.0 266.7C1084.9 268.5 1089.0 270.0 1092.5 271.7C1096.0 273.4 1098.7 275.2 1100.8 276.7C1102.9 278.2 1104.1 279.4 1105.0 280.8C1105.9 282.2 1106.4 283.5 1106.3 285.0C1106.2 286.5 1105.5 288.3 1104.2 290.0C1102.9 291.7 1101.0 293.5 1098.3 295.0C1095.6 296.5 1092.0 298.1 1088.3 299.2C1084.5 300.3 1080.0 301.2 1075.8 301.7C1071.6 302.2 1067.5 302.1 1063.3 302.0C1059.1 301.9 1054.5 301.4 1050.8 300.8C1047.0 300.2 1047.6 300.2 1040.8 298.3C1034.0 296.4 1020.1 292.4 1010.0 289.5C999.9 286.6 989.6 283.6 980.0 280.8C970.4 278.0 958.2 274.6 952.5 272.8C946.8 271.0 947.9 271.1 946.0 270.0C944.1 268.9 942.4 267.8 941.0 266.5C939.6 265.2 938.4 263.6 937.8 262.0C937.1 260.4 936.7 258.7 937.1 257.0Z" fill="#434343" stroke="#0e0e0e" stroke-width="1.6" stroke-linejoin="round" />
<path d="M944.5 256.0C945.1 254.3 946.9 251.7 949.0 250.0C951.1 248.3 953.2 247.0 957.0 246.0C960.8 245.0 966.8 244.1 972.0 244.0C977.2 243.9 981.7 244.2 988.0 245.3C994.3 246.4 1001.9 248.4 1010.0 250.5C1018.1 252.6 1027.9 255.1 1036.7 257.6C1045.5 260.1 1055.0 262.9 1063.0 265.5C1071.0 268.1 1079.5 271.2 1085.0 273.5C1090.5 275.8 1093.5 277.8 1096.0 279.5C1098.5 281.2 1099.7 282.5 1100.0 284.0C1100.3 285.5 1100.0 287.1 1098.0 288.5C1096.0 289.9 1092.3 291.5 1088.0 292.5C1083.7 293.5 1078.3 294.6 1072.0 294.5C1065.7 294.4 1058.7 293.8 1050.0 292.0C1041.3 290.2 1030.5 286.9 1020.0 284.0C1009.5 281.1 996.7 277.1 986.7 274.3C976.7 271.5 966.1 269.1 960.0 267.3C953.9 265.5 952.4 264.7 950.0 263.5C947.6 262.3 946.4 261.2 945.5 260.0C944.6 258.8 943.9 257.7 944.5 256.0Z" fill="#5c5c5c" stroke="#0c0c0c" stroke-width="1.3" stroke-linejoin="round" />
<path d="M958.5 251.5C959.2 250.6 961.2 248.9 964.0 248.0C966.8 247.1 970.7 246.4 975.0 246.3C979.3 246.2 982.5 246.2 990.0 247.6C997.5 249.0 1010.0 252.3 1020.0 255.0C1030.0 257.7 1041.7 261.1 1050.0 263.6C1058.3 266.1 1065.3 268.3 1070.0 270.0C1074.7 271.7 1076.4 272.4 1078.0 273.6C1079.6 274.8 1080.2 276.0 1079.5 277.0C1078.8 278.0 1076.9 279.2 1074.0 279.6C1071.1 280.0 1067.7 280.1 1062.0 279.3C1056.3 278.5 1048.7 276.8 1040.0 274.6C1031.3 272.5 1019.2 268.9 1010.0 266.4C1000.8 263.9 992.3 261.4 985.0 259.6C977.7 257.8 970.2 256.4 966.0 255.4C961.8 254.4 961.2 254.2 960.0 253.6C958.8 252.9 957.8 252.4 958.5 251.5Z" fill="url(#gHandle)" stroke="#0c0c0c" stroke-width="1.3" stroke-linejoin="round" />
<path d="M991 247.8Q986 254 973 257.2" fill="none" stroke="#161616" stroke-width="1" stroke-linejoin="round" /><path d="M1075.5 272.5Q1068 276 1066 280" fill="none" stroke="#161616" stroke-width="0.9" stroke-linejoin="round" />
</g>
<g id="hinge">
<polygon points="1045.8,304.2 1065.0,303.3 1099.2,298.3 1103.3,294.2 1107.5,293.3 1107.5,298.3 1110.0,300.0 1108.3,306.7 1095.0,310.8 1091.7,306.7 1066.7,318.3 1053.3,325.0 1047.5,322.5 1046.7,313.3" fill="#9ca2b8" stroke="#0e0e0e" stroke-width="0.9" stroke-linejoin="round" />
<polygon points="925.0,279.5 934.5,278.7 935.0,285.5 925.5,286.5" fill="#e9e6e0" stroke="#0e0e0e" stroke-width="0.8" stroke-linejoin="round" />
<polygon points="934.5,280.0 946.0,275.5 957.5,279.0 957.5,292.0 946.0,296.0 935.0,292.5" fill="url(#gSilver)" stroke="#0e0e0e" stroke-width="0.9" stroke-linejoin="round" />
<polyline points="948.0,276.0 948.5,295.0" fill="none" stroke="#6a6f85" stroke-width="0.8" stroke-linejoin="round" stroke-linecap="round" />
<polygon points="965.0,269.5 978.3,273.7 975.8,287.0 962.5,284.5" fill="#353535" stroke="#0e0e0e" stroke-width="0.9" stroke-linejoin="round" />
<polygon points="954.2,289.5 959.0,281.5 984.0,289.5 978.3,297.8" fill="#3e3e3e" stroke="#0e0e0e" stroke-width="0.9" stroke-linejoin="round" />
<polygon points="954.2,289.5 978.3,297.8 979.2,306.5 954.2,298.0" fill="#272727" stroke="#0e0e0e" stroke-width="0.9" stroke-linejoin="round" />
<polygon points="961.0,283.0 964.0,278.0 977.0,282.3 975.0,287.5" fill="#2c2c2c" stroke="#0e0e0e" stroke-width="0.7" stroke-linejoin="round" />
<polygon points="981.0,293.5 988.0,291.0 1003.3,296.0 1003.3,309.0 995.0,311.0 982.0,306.0" fill="#b4b4b4" stroke="#0e0e0e" stroke-width="0.8" stroke-linejoin="round" />
<polyline points="985.5,292.5 987.0,307.5" fill="none" stroke="#333" stroke-width="1.1" stroke-linejoin="round" stroke-linecap="round" /><polyline points="990.0,292.0 992.0,309.5" fill="none" stroke="#333" stroke-width="1.1" stroke-linejoin="round" stroke-linecap="round" /><polyline points="995.0,293.5 997.0,310.5" fill="none" stroke="#333" stroke-width="1.1" stroke-linejoin="round" stroke-linecap="round" /><polyline points="999.5,295.0 1001.0,310.0" fill="none" stroke="#333" stroke-width="1" stroke-linejoin="round" stroke-linecap="round" />
<polygon points="1015.0,283.7 1029.2,287.0 1025.0,300.3 1012.5,297.8" fill="#353535" stroke="#0e0e0e" stroke-width="0.9" stroke-linejoin="round" />
<polygon points="1003.3,301.2 1009.0,293.0 1033.0,301.0 1027.5,309.5" fill="#3e3e3e" stroke="#0e0e0e" stroke-width="0.9" stroke-linejoin="round" />
<polygon points="1003.3,301.2 1027.5,309.5 1027.5,319.5 1003.3,312.0" fill="#272727" stroke="#0e0e0e" stroke-width="0.9" stroke-linejoin="round" />
<polygon points="1011.0,296.5 1013.5,292.0 1026.5,296.0 1024.5,301.0" fill="#2c2c2c" stroke="#0e0e0e" stroke-width="0.7" stroke-linejoin="round" />
<polygon points="1035.0,309.5 1042.0,305.0 1049.5,307.5 1050.0,320.0 1043.0,324.0 1035.5,321.0" fill="url(#gSilver)" stroke="#0e0e0e" stroke-width="0.9" stroke-linejoin="round" />
<polygon points="1049.6,314.0 1064.0,317.6 1065.0,323.6 1050.5,320.6" fill="#ebe6dc" stroke="#0e0e0e" stroke-width="0.8" stroke-linejoin="round" /><ellipse cx="1065" cy="320.6" rx="1.8" ry="3.1" fill="#9a958c" stroke="#0e0e0e" stroke-width="0.7" />
<polyline points="953.5,300.0 955.5,318.0" fill="none" stroke="#222" stroke-width="1" stroke-linejoin="round" stroke-linecap="round" /><polyline points="1029.0,317.0 1030.3,339.0" fill="none" stroke="#222" stroke-width="1" stroke-linejoin="round" stroke-linecap="round" />
</g>
<g id="mech-mid">
<ellipse cx="968" cy="530" rx="29.5" ry="30.5" fill="#6b6b6b" stroke="#262626" stroke-width="1" />
<ellipse cx="968" cy="530" rx="28.6" ry="29.6" fill="none" stroke="#2e2e2e" stroke-width="3.4" stroke-dasharray="1.5 1.7"/>
<ellipse cx="968" cy="530" rx="28.8" ry="29.8" fill="none" stroke="#c4c4c4" stroke-width="3" stroke-dasharray="0.7 2.5" stroke-dashoffset="0.3"/>
<ellipse cx="968" cy="530" rx="26" ry="27" fill="none" stroke="#2a2a2a" stroke-width="0.9" />
<path d="M958.3 512L960 533Q962 543.5 972 543Q980 541.5 982 534L986 525" fill="none" stroke="#0e0e0e" stroke-width="1.1" stroke-linejoin="round" /><polyline points="967.0,514.0 968.3,541.0" fill="none" stroke="#0e0e0e" stroke-width="1" stroke-linejoin="round" stroke-linecap="round" />
<polygon points="978.3,540.0 1088.0,568.0 1092.0,600.0 1060.0,612.0 978.3,592.0" fill="#5e5e5e" stroke="#0e0e0e" stroke-width="1" stroke-linejoin="round" />
<polygon points="977.0,543.0 981.0,536.0 1093.0,566.5 1086.0,571.5" fill="#585858" stroke="#0e0e0e" stroke-width="0.8" stroke-linejoin="round" />
<polygon points="978.5,546.0 1086.0,572.0 1085.0,577.0 978.5,551.0" fill="#727272" stroke="#0e0e0e" stroke-width="0.6" stroke-linejoin="round" />
<polygon points="986.7,526.3 1100.0,546.7 1093.0,566.7 980.5,536.0" fill="url(#gRoller)" stroke="#0e0e0e" stroke-width="0.9" stroke-linejoin="round" />
<polygon points="1012.5,531.0 1018.5,532.0 1014.5,545.3 1008.5,543.6" fill="#6a6a6a" stroke="#333" stroke-width="0.6" stroke-linejoin="round" />
<polygon points="1052.0,538.0 1059.0,539.3 1054.0,556.0 1047.0,554.0" fill="#6a6a6a" stroke="#333" stroke-width="0.6" stroke-linejoin="round" />
<polygon points="1093.0,546.5 1104.5,543.0 1109.0,549.0 1109.0,570.0 1103.0,571.0 1101.0,552.0 1094.0,566.0" fill="#858585" stroke="#0e0e0e" stroke-width="0.8" stroke-linejoin="round" />
<polygon points="1086.0,552.0 1148.0,552.0 1149.5,622.0 1082.0,603.0 1077.0,600.0 1091.0,588.0 1091.0,579.0" fill="#646464" stroke="#0e0e0e" stroke-width="1" stroke-linejoin="round" />
<path d="M1104 599Q1122 612 1141 601" fill="none" stroke="#b8b8b8" stroke-width="4.5" stroke-linejoin="round" stroke-dasharray="1.3 1.5"/>
<path d="M1104 599Q1122 612 1141 601" fill="none" stroke="#2b2b2b" stroke-width="1" stroke-linejoin="round" transform="translate(0,-2.6)"/>
<path d="M1104 573Q1108 586 1105 599" fill="none" stroke="#b8b8b8" stroke-width="6" stroke-linejoin="round" stroke-dasharray="1.3 1.6"/>
<path d="M1141 601Q1149 596 1147 588" fill="none" stroke="#3a3a3a" stroke-width="1" stroke-linejoin="round" />
</g>
<g id="bracket">
<polygon points="921.0,440.0 983.0,420.0 983.0,470.0 926.0,458.0" fill="#505050" stroke="none" stroke-width="0" stroke-linejoin="round" />
<polygon points="979.0,363.0 960.0,373.0 945.0,383.0 930.0,398.0 921.0,412.0 918.5,425.0 918.5,503.0 923.0,507.5 926.0,507.0 926.0,455.0 938.0,447.0 983.0,432.0 983.0,372.0" fill="#6e6e6e" stroke="#0e0e0e" stroke-width="1.2" stroke-linejoin="round" />
<path d="M960 373L979 363L983 364L983 371L966 378Z" fill="#b0b0b0" stroke="#0e0e0e" stroke-width="0.8" stroke-linejoin="round" />
<path d="M930 440Q923 428 930 416Q938 404 952 396" fill="none" stroke="#0e0e0e" stroke-width="1" stroke-linejoin="round" />
<polyline points="936.7,445.8 980.0,427.5" fill="none" stroke="#0e0e0e" stroke-width="1" stroke-linejoin="round" stroke-linecap="round" /><polyline points="938.0,442.0 980.0,424.5" fill="none" stroke="#0e0e0e" stroke-width="0.8" stroke-linejoin="round" stroke-linecap="round" />
<ellipse cx="935" cy="430" rx="2.2" ry="3" fill="#999" stroke="#0e0e0e" stroke-width="0.9" />
<polygon points="938.0,450.0 943.0,447.3 1053.0,480.0 1059.0,488.0 1056.5,493.0 941.7,458.5" fill="#4a4a4a" stroke="#161616" stroke-width="1" stroke-linejoin="round" />
<polyline points="942.0,450.0 1055.0,484.0" fill="none" stroke="#6a6a6a" stroke-width="1" stroke-linejoin="round" stroke-linecap="round" stroke-dasharray="1.5 1.5"/>
<path d="M1011.7 440L1013 462Q1014 470 1019 474" fill="none" stroke="#0e0e0e" stroke-width="1.2" stroke-linejoin="round" /><path d="M1053 452L1055 474Q1057 484 1062 489" fill="none" stroke="#0e0e0e" stroke-width="1.2" stroke-linejoin="round" />
<polygon points="925.8,455.0 1074.0,497.5 1074.0,548.0 925.8,506.7" fill="#767574" stroke="#0e0e0e" stroke-width="1.3" stroke-linejoin="round" />
<polygon points="925.8,455.0 929.0,452.5 1076.0,495.0 1074.0,497.5" fill="#9a9a9a" stroke="#0e0e0e" stroke-width="0.7" stroke-linejoin="round" />
<ellipse cx="962.5" cy="492.5" rx="12.3" ry="16" fill="#707070" stroke="#0e0e0e" stroke-width="1.4" transform="rotate(-12 962.5 492.5)" />
<ellipse cx="1000" cy="502.7" rx="12.3" ry="16" fill="#707070" stroke="#0e0e0e" stroke-width="1.4" transform="rotate(-12 1000 502.7)" />
<ellipse cx="1037.5" cy="513.3" rx="12.3" ry="16" fill="#707070" stroke="#0e0e0e" stroke-width="1.4" transform="rotate(-12 1037.5 513.3)" />
<polygon points="1138.0,404.0 1117.0,415.0 1095.0,429.0 1082.0,443.0 1076.0,458.0 1075.0,543.0 1079.0,549.0 1084.0,550.0 1103.0,543.0 1108.0,548.0 1113.0,567.0 1116.0,600.0 1148.0,600.0 1147.0,517.0 1143.0,410.0" fill="#656565" stroke="#0e0e0e" stroke-width="1.2" stroke-linejoin="round" />
<path d="M1134 409Q1098 425 1086 445Q1080 456 1079.5 470L1079 540" fill="none" stroke="#2e2e2e" stroke-width="1" stroke-linejoin="round" />
<polygon points="1138.5,405.0 1143.0,410.0 1147.0,517.0 1148.5,600.0 1140.0,600.0 1138.0,517.0" fill="#525252" stroke="#0e0e0e" stroke-width="0.9" stroke-linejoin="round" />
<polyline points="1093.0,455.0 1136.0,438.0" fill="none" stroke="#0e0e0e" stroke-width="1.2" stroke-linejoin="round" stroke-linecap="round" /><polyline points="1106.7,485.0 1136.0,471.7" fill="none" stroke="#0e0e0e" stroke-width="1.2" stroke-linejoin="round" stroke-linecap="round" />
<ellipse cx="1093" cy="474" rx="11.5" ry="15.5" fill="#5a5a5a" stroke="#0e0e0e" stroke-width="1" transform="rotate(-15 1093 474)" />
<path d="M1090 466Q1098 458 1104 468L1108 477Q1106 485 1097 487Q1089 486 1089 478Z" fill="#9b9b9b" stroke="#0e0e0e" stroke-width="1" stroke-linejoin="round" />
<path d="M1095 471L1102 474L1098 481Z" fill="#c8c8c8" stroke="#0e0e0e" stroke-width="0.7" stroke-linejoin="round" />
<ellipse cx="1087" cy="506.7" rx="6.3" ry="9.3" fill="#858585" stroke="#0e0e0e" stroke-width="1" transform="rotate(-8 1087 506.7)" /><ellipse cx="1087" cy="506.7" rx="2.2" ry="3" fill="#d8d8d8" stroke="#0e0e0e" stroke-width="0.8" />
<ellipse cx="1087" cy="537.5" rx="6.3" ry="9.3" fill="#858585" stroke="#0e0e0e" stroke-width="1" transform="rotate(-8 1087 537.5)" /><ellipse cx="1087" cy="537.5" rx="2.2" ry="3" fill="#d8d8d8" stroke="#0e0e0e" stroke-width="0.8" />
<ellipse cx="1129.5" cy="564" rx="13" ry="18.5" fill="#4e4e4e" stroke="#0e0e0e" stroke-width="1" transform="rotate(-8 1129.5 564)" /><ellipse cx="1131.5" cy="563.5" rx="9.5" ry="14.5" fill="#7a7a7a" stroke="#222" stroke-width="1.2" transform="rotate(-8 1131.5 563.5)" /><ellipse cx="1132" cy="564" rx="6" ry="9.5" fill="#5a5a5a" stroke="#222" stroke-width="1" transform="rotate(-8 1132 564)" />
<polygon points="1134.4,560.6 1147.0,562.6 1148.0,572.0 1135.0,570.6" fill="#eee6de" stroke="#0e0e0e" stroke-width="0.8" stroke-linejoin="round" /><ellipse cx="1147.6" cy="567.3" rx="2.9" ry="4.8" fill="#b9b1a9" stroke="#0e0e0e" stroke-width="0.8" />
<polygon points="1152.0,567.5 1148.6,568.7 1138.0,584.0 1141.0,586.0 1146.5,590.5 1149.5,597.0 1152.0,597.0" fill="#fdfdfb" stroke="none" stroke-width="0" stroke-linejoin="round" />
<polyline points="1148.6,568.7 1138.0,584.0 1141.0,586.0 1146.5,590.5 1149.3,597.0" fill="none" stroke="#0e0e0e" stroke-width="1" stroke-linejoin="round" stroke-linecap="round" />
<polyline points="1124.0,563.0 1124.6,588.0" fill="none" stroke="#2a2a2a" stroke-width="1.6" stroke-linejoin="round" stroke-linecap="round" /><polyline points="1116.0,589.0 1142.0,576.0" fill="none" stroke="#2a2a2a" stroke-width="1.4" stroke-linejoin="round" stroke-linecap="round" />
</g>
<g id="main-pcb">
<path d="M968 576L1062 600L1080 603L1159 623L1159 700L1189 798L1189 832L1180 838L1157 833L1155 857L1102 877L1085 873L1085.0 873.0C1082.4 872.2 1074.4 869.5 1069.6 868.1C1064.8 866.7 1061.0 866.0 1056.3 864.4C1051.6 862.8 1046.4 861.0 1041.5 858.5C1036.6 856.0 1032.2 853.5 1026.7 849.6C1021.2 845.7 1013.4 839.6 1008.3 835.0C1003.1 830.4 1000.0 826.4 995.8 821.7C991.6 817.0 986.8 811.4 983.3 806.7C979.8 802.0 977.4 798.0 975.0 793.3C972.6 788.6 971.4 784.2 969.2 778.3C967.0 772.4 964.0 764.7 961.7 757.8C959.4 750.9 956.4 740.2 955.3 736.7L955 677L956.7 667L957.5 648L965.8 648L965.8 590Z" fill="#0a5a14" stroke="#06300c" stroke-width="1" stroke-linejoin="round" />
<polygon points="1102.0,876.0 1155.0,857.0 1155.0,861.0 1102.0,880.0 1086.0,876.0 1085.0,872.0" fill="#0a4413" stroke="#06300c" stroke-width="0.8" stroke-linejoin="round" />
<polygon points="1080.0,603.0 1159.0,623.0 1159.0,625.4 1080.0,605.4" fill="#178028" stroke="#06300c" stroke-width="0.5" stroke-linejoin="round" />
<polygon points="978.3,551.0 1085.0,577.0 1062.0,601.0 978.3,581.0" fill="#5c5c5c" stroke="none" stroke-width="0" stroke-linejoin="round" />
<polyline points="978.3,548.0 978.3,582.0" fill="none" stroke="#0e0e0e" stroke-width="1" stroke-linejoin="round" stroke-linecap="round" />
<polyline points="979.0,553.5 1084.0,579.0" fill="none" stroke="#333" stroke-width="1.4" stroke-linejoin="round" stroke-linecap="round" />
<polygon points="992.0,590.0 999.6,591.8 999.6,612.0 992.0,610.0" fill="#8c8c8c" stroke="#333" stroke-width="0.6" stroke-linejoin="round" />
<polygon points="1004.9,593.5 1012.5,595.3 1012.5,615.5 1004.9,613.5" fill="#8c8c8c" stroke="#333" stroke-width="0.6" stroke-linejoin="round" />
<polygon points="1017.8,597.0 1025.4,598.8 1025.4,619.0 1017.8,617.0" fill="#8c8c8c" stroke="#333" stroke-width="0.6" stroke-linejoin="round" />
<polygon points="1030.7,600.5 1038.3,602.3 1038.3,622.5 1030.7,620.5" fill="#8c8c8c" stroke="#333" stroke-width="0.6" stroke-linejoin="round" />
<polygon points="1043.6,604.0 1051.2,605.8 1051.2,626.0 1043.6,624.0" fill="#8c8c8c" stroke="#333" stroke-width="0.6" stroke-linejoin="round" />
<polygon points="992.5,611.0 1003.0,613.5 1003.0,621.0 992.5,618.5" fill="#c8a040" stroke="#0e0e0e" stroke-width="0.6" stroke-linejoin="round" />
<polygon points="1008.0,614.0 1018.0,617.0 1018.0,625.0 1008.0,622.0" fill="#dc5a4a" stroke="#0e0e0e" stroke-width="0.6" stroke-linejoin="round" />
<polygon points="1020.0,618.2 1030.0,621.2 1030.0,629.2 1020.0,626.2" fill="#dc5a4a" stroke="#0e0e0e" stroke-width="0.6" stroke-linejoin="round" />
<polygon points="1032.0,622.4 1042.0,625.4 1042.0,633.4 1032.0,630.4" fill="#dc5a4a" stroke="#0e0e0e" stroke-width="0.6" stroke-linejoin="round" />
<polygon points="1044.0,626.6 1054.0,629.6 1054.0,637.6 1044.0,634.6" fill="#dc5a4a" stroke="#0e0e0e" stroke-width="0.6" stroke-linejoin="round" />
<polygon points="989.0,630.0 996.7,632.0 996.7,645.0 989.0,643.0" fill="#c0487a" stroke="#0e0e0e" stroke-width="0.6" stroke-linejoin="round" />
<polygon points="981.0,636.0 986.7,637.5 986.7,644.0 981.0,642.5" fill="#d07020" stroke="#0e0e0e" stroke-width="0.6" stroke-linejoin="round" />
<polygon points="968.8,655.0 972.0,655.9 972.0,666.0 968.8,665.1" fill="#1f2c9c" stroke="#0a104a" stroke-width="0.5" stroke-linejoin="round" />
<polygon points="973.0,656.2 976.2,657.1 976.2,667.2 973.0,666.3" fill="#1f2c9c" stroke="#0a104a" stroke-width="0.5" stroke-linejoin="round" />
<polygon points="977.2,657.4 980.4,658.3 980.4,668.4 977.2,667.5" fill="#1f2c9c" stroke="#0a104a" stroke-width="0.5" stroke-linejoin="round" />
<polygon points="981.4,658.6 984.6,659.5 984.6,669.6 981.4,668.7" fill="#1f2c9c" stroke="#0a104a" stroke-width="0.5" stroke-linejoin="round" />
<polygon points="985.6,659.8 988.8,660.7 988.8,670.8 985.6,669.9" fill="#1f2c9c" stroke="#0a104a" stroke-width="0.5" stroke-linejoin="round" />
<polygon points="975.5,614.0 978.7,614.9 978.7,623.0 975.5,622.1" fill="#1f2c9c" stroke="#0a104a" stroke-width="0.5" stroke-linejoin="round" />
<polygon points="975.5,631.0 978.7,631.9 978.7,641.0 975.5,640.1" fill="#1f2c9c" stroke="#0a104a" stroke-width="0.5" stroke-linejoin="round" />
<polygon points="1075.5,642.5 1078.7,643.4 1078.7,654.5 1075.5,653.6" fill="#1f2c9c" stroke="#0a104a" stroke-width="0.5" stroke-linejoin="round" />
<polygon points="1079.7,643.7 1082.9,644.6 1082.9,655.7 1079.7,654.8" fill="#1f2c9c" stroke="#0a104a" stroke-width="0.5" stroke-linejoin="round" />
<polygon points="1083.9,644.9 1087.1,645.8 1087.1,656.9 1083.9,656.0" fill="#1f2c9c" stroke="#0a104a" stroke-width="0.5" stroke-linejoin="round" />
<polygon points="1088.1,646.1 1091.3,647.0 1091.3,658.1 1088.1,657.2" fill="#1f2c9c" stroke="#0a104a" stroke-width="0.5" stroke-linejoin="round" />
<polygon points="1092.3,647.3 1095.5,648.2 1095.5,659.3 1092.3,658.4" fill="#1f2c9c" stroke="#0a104a" stroke-width="0.5" stroke-linejoin="round" />
<polygon points="1096.5,648.5 1099.7,649.4 1099.7,660.5 1096.5,659.6" fill="#1f2c9c" stroke="#0a104a" stroke-width="0.5" stroke-linejoin="round" />
<polygon points="1050.6,660.0 1053.8,660.9 1053.8,670.0 1050.6,669.1" fill="#1f2c9c" stroke="#0a104a" stroke-width="0.5" stroke-linejoin="round" />
<polygon points="1054.8,661.2 1058.0,662.1 1058.0,671.2 1054.8,670.3" fill="#1f2c9c" stroke="#0a104a" stroke-width="0.5" stroke-linejoin="round" />
<polygon points="1059.0,662.4 1062.2,663.3 1062.2,672.4 1059.0,671.5" fill="#1f2c9c" stroke="#0a104a" stroke-width="0.5" stroke-linejoin="round" />
<polygon points="1063.2,663.6 1066.4,664.5 1066.4,673.6 1063.2,672.7" fill="#1f2c9c" stroke="#0a104a" stroke-width="0.5" stroke-linejoin="round" />
<polygon points="1050.6,673.8 1053.8,674.7 1053.8,683.8 1050.6,682.9" fill="#1f2c9c" stroke="#0a104a" stroke-width="0.5" stroke-linejoin="round" />
<polygon points="1054.8,675.0 1058.0,675.9 1058.0,685.0 1054.8,684.1" fill="#1f2c9c" stroke="#0a104a" stroke-width="0.5" stroke-linejoin="round" />
<polygon points="1059.0,676.2 1062.2,677.1 1062.2,686.2 1059.0,685.3" fill="#1f2c9c" stroke="#0a104a" stroke-width="0.5" stroke-linejoin="round" />
<polygon points="1063.2,677.4 1066.4,678.3 1066.4,687.4 1063.2,686.5" fill="#1f2c9c" stroke="#0a104a" stroke-width="0.5" stroke-linejoin="round" />
<polygon points="1075.5,682.5 1078.7,683.4 1078.7,694.5 1075.5,693.6" fill="#1f2c9c" stroke="#0a104a" stroke-width="0.5" stroke-linejoin="round" />
<polygon points="1079.7,683.7 1082.9,684.6 1082.9,695.7 1079.7,694.8" fill="#1f2c9c" stroke="#0a104a" stroke-width="0.5" stroke-linejoin="round" />
<polygon points="1083.9,684.9 1087.1,685.8 1087.1,696.9 1083.9,696.0" fill="#1f2c9c" stroke="#0a104a" stroke-width="0.5" stroke-linejoin="round" />
<polygon points="1026.0,795.0 1029.2,795.9 1029.2,804.0 1026.0,803.1" fill="#1f2c9c" stroke="#0a104a" stroke-width="0.5" stroke-linejoin="round" />
<polygon points="1030.2,796.2 1033.4,797.1 1033.4,805.2 1030.2,804.3" fill="#1f2c9c" stroke="#0a104a" stroke-width="0.5" stroke-linejoin="round" />
<polygon points="1036.5,803.5 1039.7,804.4 1039.7,810.5 1036.5,809.6" fill="#1f2c9c" stroke="#0a104a" stroke-width="0.5" stroke-linejoin="round" />
<polygon points="1040.7,804.7 1043.9,805.6 1043.9,811.7 1040.7,810.8" fill="#1f2c9c" stroke="#0a104a" stroke-width="0.5" stroke-linejoin="round" />
<polygon points="1047.0,837.5 1050.2,838.4 1050.2,848.5 1047.0,847.6" fill="#1f2c9c" stroke="#0a104a" stroke-width="0.5" stroke-linejoin="round" />
<polygon points="1051.2,838.7 1054.4,839.6 1054.4,849.7 1051.2,848.8" fill="#1f2c9c" stroke="#0a104a" stroke-width="0.5" stroke-linejoin="round" />
<polygon points="1055.4,839.9 1058.6,840.8 1058.6,850.9 1055.4,850.0" fill="#1f2c9c" stroke="#0a104a" stroke-width="0.5" stroke-linejoin="round" />
<polygon points="1087.0,700.0 1090.2,700.9 1090.2,709.0 1087.0,708.1" fill="#1f2c9c" stroke="#0a104a" stroke-width="0.5" stroke-linejoin="round" />
<polygon points="1091.2,701.2 1094.4,702.1 1094.4,710.2 1091.2,709.3" fill="#1f2c9c" stroke="#0a104a" stroke-width="0.5" stroke-linejoin="round" />
<polygon points="1098.0,656.0 1101.2,656.9 1101.2,665.0 1098.0,664.1" fill="#1f2c9c" stroke="#0a104a" stroke-width="0.5" stroke-linejoin="round" />
<polygon points="1102.2,657.2 1105.4,658.1 1105.4,666.2 1102.2,665.3" fill="#1f2c9c" stroke="#0a104a" stroke-width="0.5" stroke-linejoin="round" />
<polygon points="992.5,647.5 1002.5,650.3 1002.5,655.3 992.5,652.5" fill="#1e1e1e" stroke="#0a0a0a" stroke-width="0.5" stroke-linejoin="round" />
<polygon points="992.5,665.0 1002.5,667.8 1002.5,672.8 992.5,670.0" fill="#1e1e1e" stroke="#0a0a0a" stroke-width="0.5" stroke-linejoin="round" />
<polygon points="1038.8,650.0 1045.0,651.7 1045.0,661.7 1038.8,660.0" fill="#1e1e1e" stroke="#0a0a0a" stroke-width="0.5" stroke-linejoin="round" />
<polygon points="1000.0,700.0 1005.0,701.4 1005.0,706.4 1000.0,705.0" fill="#1e1e1e" stroke="#0a0a0a" stroke-width="0.5" stroke-linejoin="round" />
<ellipse cx="998.5" cy="690" rx="1.7" ry="1.9" fill="#2b8a3c" stroke="#06300c" stroke-width="0.5" />
<ellipse cx="998.5" cy="698.8" rx="1.7" ry="1.9" fill="#2b8a3c" stroke="#06300c" stroke-width="0.5" />
<ellipse cx="998.5" cy="706.9" rx="1.7" ry="1.9" fill="#2b8a3c" stroke="#06300c" stroke-width="0.5" />
<ellipse cx="998.5" cy="714.4" rx="1.7" ry="1.9" fill="#2b8a3c" stroke="#06300c" stroke-width="0.5" />
<ellipse cx="1010" cy="720" rx="1.4" ry="1.6" fill="#2b8a3c" stroke="#06300c" stroke-width="0.4" />
<ellipse cx="1018" cy="735" rx="1.4" ry="1.6" fill="#2b8a3c" stroke="#06300c" stroke-width="0.4" />
<ellipse cx="1030" cy="760" rx="1.4" ry="1.6" fill="#2b8a3c" stroke="#06300c" stroke-width="0.4" />
<ellipse cx="1062" cy="725" rx="1.4" ry="1.6" fill="#2b8a3c" stroke="#06300c" stroke-width="0.4" />
<ellipse cx="1080" cy="716" rx="1.4" ry="1.6" fill="#2b8a3c" stroke="#06300c" stroke-width="0.4" />
<ellipse cx="1100" cy="722" rx="1.4" ry="1.6" fill="#2b8a3c" stroke="#06300c" stroke-width="0.4" />
<ellipse cx="1140" cy="700" rx="1.4" ry="1.6" fill="#2b8a3c" stroke="#06300c" stroke-width="0.4" />
<polygon points="999.4,563.3 1001.8,561.1 1001.8,582.0 999.4,584.5" fill="#4a4a4a" stroke="#0e0e0e" stroke-width="0.6" stroke-linejoin="round" />
<polygon points="991.7,561.7 999.4,563.3 999.4,584.5 991.7,583.0" fill="#909090" stroke="#0e0e0e" stroke-width="0.7" stroke-linejoin="round" />
<polygon points="991.7,561.7 994.1,559.5 1001.8,561.1 999.4,563.3" fill="#bababa" stroke="#0e0e0e" stroke-width="0.6" stroke-linejoin="round" />
<polygon points="1012.2,566.0 1014.6,563.8 1014.6,586.0 1012.2,588.5" fill="#4a4a4a" stroke="#0e0e0e" stroke-width="0.6" stroke-linejoin="round" />
<polygon points="1004.4,564.4 1012.2,566.0 1012.2,588.5 1004.4,587.0" fill="#909090" stroke="#0e0e0e" stroke-width="0.7" stroke-linejoin="round" />
<polygon points="1004.4,564.4 1006.8,562.2 1014.6,563.8 1012.2,566.0" fill="#bababa" stroke="#0e0e0e" stroke-width="0.6" stroke-linejoin="round" />
<polygon points="1025.5,569.9 1027.9,567.7 1027.9,589.5 1025.5,592.0" fill="#4a4a4a" stroke="#0e0e0e" stroke-width="0.6" stroke-linejoin="round" />
<polygon points="1017.2,568.3 1025.5,569.9 1025.5,592.0 1017.2,590.5" fill="#909090" stroke="#0e0e0e" stroke-width="0.7" stroke-linejoin="round" />
<polygon points="1017.2,568.3 1019.6,566.1 1027.9,567.7 1025.5,569.9" fill="#bababa" stroke="#0e0e0e" stroke-width="0.6" stroke-linejoin="round" />
<polygon points="1038.9,573.8 1041.3,571.6 1041.3,593.0 1038.9,595.5" fill="#4a4a4a" stroke="#0e0e0e" stroke-width="0.6" stroke-linejoin="round" />
<polygon points="1030.5,572.2 1038.9,573.8 1038.9,595.5 1030.5,594.0" fill="#909090" stroke="#0e0e0e" stroke-width="0.7" stroke-linejoin="round" />
<polygon points="1030.5,572.2 1032.9,570.0 1041.3,571.6 1038.9,573.8" fill="#bababa" stroke="#0e0e0e" stroke-width="0.6" stroke-linejoin="round" />
<polygon points="1052.2,577.1 1054.6,574.9 1054.6,596.0 1052.2,598.5" fill="#4a4a4a" stroke="#0e0e0e" stroke-width="0.6" stroke-linejoin="round" />
<polygon points="1043.3,575.5 1052.2,577.1 1052.2,598.5 1043.3,597.0" fill="#909090" stroke="#0e0e0e" stroke-width="0.7" stroke-linejoin="round" />
<polygon points="1043.3,575.5 1045.7,573.3 1054.6,574.9 1052.2,577.1" fill="#bababa" stroke="#0e0e0e" stroke-width="0.6" stroke-linejoin="round" />
<polygon points="980.0,582.2 987.8,577.8 1062.2,595.5 1060.0,602.2" fill="#3d3d3d" stroke="#111" stroke-width="0.8" stroke-linejoin="round" />
<polygon points="991.7,575.0 999.4,576.6 999.4,584.5 991.7,583.0" fill="#909090" stroke="#0e0e0e" stroke-width="0.6" stroke-linejoin="round" />
<polygon points="1004.4,579.0 1012.2,580.6 1012.2,588.5 1004.4,587.0" fill="#909090" stroke="#0e0e0e" stroke-width="0.6" stroke-linejoin="round" />
<polygon points="1017.2,582.5 1025.5,584.1 1025.5,592.0 1017.2,590.5" fill="#909090" stroke="#0e0e0e" stroke-width="0.6" stroke-linejoin="round" />
<polygon points="1030.5,586.0 1038.9,587.6 1038.9,595.5 1030.5,594.0" fill="#909090" stroke="#0e0e0e" stroke-width="0.6" stroke-linejoin="round" />
<polygon points="1043.3,589.0 1052.2,590.6 1052.2,598.5 1043.3,597.0" fill="#909090" stroke="#0e0e0e" stroke-width="0.6" stroke-linejoin="round" />
<polygon points="980.0,582.2 1060.0,602.2 1060.0,610.5 980.0,590.3" fill="#2b2b2b" stroke="#111" stroke-width="0.8" stroke-linejoin="round" />
<path d="M1061 588Q1061 578 1068 574L1076.7 570.5L1083.3 569.4L1085.5 576.7L1091 579L1091 587.8L1075.5 599L1076.7 602L1065.5 597.8L1064.4 623L1061 621Z" fill="#7c7c7c" stroke="#0e0e0e" stroke-width="0.9" stroke-linejoin="round" />
<path d="M1062.5 590Q1062.5 580 1069 575.5L1078 572" fill="none" stroke="#c4c4c4" stroke-width="1.6" stroke-linejoin="round" />
<polygon points="1038.8,661.0 1047.5,663.4 1047.5,688.4 1038.8,686.0" fill="#b868b8" stroke="#0e0e0e" stroke-width="0.7" stroke-linejoin="round" />
<polyline points="1038.8,673.5 1047.5,676.0" fill="none" stroke="#6a3a6a" stroke-width="0.8" stroke-linejoin="round" stroke-linecap="round" />
<polygon points="1057.5,687.5 1060.5,683.8 1075.0,687.8 1071.5,691.5" fill="#d48ad4" stroke="#0e0e0e" stroke-width="0.7" stroke-linejoin="round" /><polygon points="1071.5,691.5 1075.0,687.8 1075.0,704.0 1071.5,708.0" fill="#8a4a8a" stroke="#0e0e0e" stroke-width="0.7" stroke-linejoin="round" /><polygon points="1057.5,687.5 1071.5,691.5 1071.5,708.0 1057.5,704.0" fill="#a85aa8" stroke="#0e0e0e" stroke-width="0.7" stroke-linejoin="round" />
<polygon points="1062.0,838.0 1068.0,832.0 1090.0,840.0 1084.0,846.0" fill="#c47ac4" stroke="#0e0e0e" stroke-width="0.7" stroke-linejoin="round" /><polygon points="1062.0,838.0 1084.0,846.0 1084.0,856.0 1062.0,848.0" fill="#b565b5" stroke="#0e0e0e" stroke-width="0.7" stroke-linejoin="round" />
<polygon points="1090.0,822.0 1100.0,818.0 1100.0,838.0 1090.0,842.0" fill="#c86a1a" stroke="#0e0e0e" stroke-width="0.6" stroke-linejoin="round" />
<polygon points="953.0,671.3 958.8,668.0 993.0,676.9 986.3,680.0" fill="#ea4848" stroke="#0e0e0e" stroke-width="0.7" stroke-linejoin="round" /><polygon points="986.3,680.0 993.0,676.9 993.0,726.0 986.3,745.0" fill="#c2382e" stroke="#0e0e0e" stroke-width="0.7" stroke-linejoin="round" /><polygon points="953.0,671.3 986.3,680.0 986.3,745.0 972.0,740.0 955.0,733.0" fill="#a62b2b" stroke="#0e0e0e" stroke-width="0.7" stroke-linejoin="round" />
<polygon points="965.0,600.0 972.0,594.0 987.0,597.5 980.0,604.0" fill="#e4e4e4" stroke="#0e0e0e" stroke-width="0.7" stroke-linejoin="round" /><polygon points="980.0,604.0 987.0,597.5 987.0,608.0 980.0,614.0" fill="#909090" stroke="#0e0e0e" stroke-width="0.7" stroke-linejoin="round" /><polygon points="965.0,600.0 980.0,604.0 980.0,614.0 965.0,610.0" fill="#b8b8b8" stroke="#0e0e0e" stroke-width="0.7" stroke-linejoin="round" />
<polygon points="1086.7,619.0 1089.0,615.5 1097.0,617.5 1095.0,621.0" fill="#e2c456" stroke="#0e0e0e" stroke-width="0.7" stroke-linejoin="round" /><polygon points="1086.7,619.0 1095.0,621.0 1095.0,645.0 1086.7,643.0" fill="#b8982e" stroke="#0e0e0e" stroke-width="0.7" stroke-linejoin="round" />
<polygon points="1096.7,621.5 1099.0,618.0 1107.0,620.0 1105.0,623.5" fill="#e2c456" stroke="#0e0e0e" stroke-width="0.7" stroke-linejoin="round" /><polygon points="1096.7,621.5 1105.0,623.5 1105.0,647.0 1096.7,645.0" fill="#b8982e" stroke="#0e0e0e" stroke-width="0.7" stroke-linejoin="round" />
<polygon points="1103.0,622.5 1115.0,619.0 1152.0,631.5 1145.0,638.5" fill="#dadada" stroke="#0e0e0e" stroke-width="0.7" stroke-linejoin="round" /><polygon points="1145.0,638.5 1152.0,631.5 1155.0,648.0 1145.0,654.0" fill="#b0b0b0" stroke="#0e0e0e" stroke-width="0.7" stroke-linejoin="round" /><polygon points="1103.0,622.5 1145.0,638.5 1145.0,654.0 1103.0,644.0" fill="#9c9c9c" stroke="#0e0e0e" stroke-width="0.7" stroke-linejoin="round" />
<ellipse cx="1151.5" cy="643" rx="4.6" ry="7.6" fill="#cfcfcf" stroke="#0e0e0e" stroke-width="0.9" transform="rotate(-10 1151.5 643)" /><ellipse cx="1151.5" cy="643" rx="2.6" ry="4.8" fill="#8a8a8a" stroke="#0e0e0e" stroke-width="0.7" transform="rotate(-10 1151.5 643)" />
<polygon points="1103.0,647.0 1108.0,645.0 1153.0,658.0 1150.0,664.0 1103.0,651.0" fill="#ececec" stroke="#0e0e0e" stroke-width="0.7" stroke-linejoin="round" /><polygon points="1103.0,651.0 1150.0,664.0 1150.0,690.0 1103.0,676.0" fill="#9e9e9e" stroke="#0e0e0e" stroke-width="0.7" stroke-linejoin="round" />
<ellipse cx="1168" cy="812" rx="2.4" ry="3.2" fill="#d8d8d0" stroke="#3a3a3a" stroke-width="0.7" />
<ellipse cx="1176" cy="809" rx="2.4" ry="3.2" fill="#d8d8d0" stroke="#3a3a3a" stroke-width="0.7" />
<ellipse cx="1168" cy="826" rx="2.4" ry="3.2" fill="#d8d8d0" stroke="#3a3a3a" stroke-width="0.7" />
<ellipse cx="1176" cy="823" rx="2.4" ry="3.2" fill="#d8d8d0" stroke="#3a3a3a" stroke-width="0.7" />
<polygon points="1130.0,818.0 1150.0,812.0 1150.0,826.0 1130.0,832.0" fill="#c2c2c2" stroke="#0e0e0e" stroke-width="0.6" stroke-linejoin="round" />
</g>
<g id="flex">
<polygon points="920.0,615.0 930.5,611.5 930.5,661.0 920.0,657.0" fill="#262626" stroke="#0c0c0c" stroke-width="1" stroke-linejoin="round" stroke-dasharray="1.2 1"/>
<polygon points="922.0,613.5 952.0,604.5 954.0,607.5 931.0,616.0" fill="#3a3a3a" stroke="#0c0c0c" stroke-width="0.8" stroke-linejoin="round" />
<polygon points="930.0,626.9 965.0,613.0 965.0,641.3 930.0,655.5" fill="#858585" stroke="#0e0e0e" stroke-width="0.9" stroke-linejoin="round" />
<polygon points="930.0,626.9 934.0,625.3 934.0,653.8 930.0,655.5" fill="#b4b4b4" stroke="none" stroke-width="0" stroke-linejoin="round" />
<polyline points="930.0,633.0 965.0,619.0" fill="none" stroke="#6a6a6a" stroke-width="0.8" stroke-linejoin="round" stroke-linecap="round" />
</g>
<g id="drive-plate">
<polygon points="1130.0,817.0 1190.0,797.0 1190.0,802.0 1130.0,823.0" fill="#bcbcbc" stroke="#0e0e0e" stroke-width="0.7" stroke-linejoin="round" />
<polygon points="996.3,631.3 1012.5,631.9 1027.5,640.0 1031.3,656.3 1036.3,675.0 1041.3,691.3 1050.0,702.5 1061.3,706.3 1075.0,702.5 1095.0,695.0 1123.0,663.0 1185.0,668.0 1200.0,700.0 1190.0,797.0 1130.0,817.0 1106.7,807.0 1078.0,818.0 1053.0,810.0 1036.7,798.0 1015.0,787.0 985.0,760.0 980.0,735.0 992.5,730.0 1000.0,720.0 1007.5,703.8 1008.8,687.5 1003.8,670.0 1000.0,650.0" fill="url(#gPlate)" stroke="#0e0e0e" stroke-width="1" stroke-linejoin="round" />
<polygon points="1027.0,640.0 1030.0,640.6 1034.4,656.0 1041.0,675.0 1045.4,688.0 1053.6,698.6 1062.5,702.4 1075.0,699.4 1094.0,691.8 1093.0,695.0 1075.0,702.8 1061.5,706.4 1050.0,702.6 1041.4,691.6 1036.3,675.0 1031.3,656.3" fill="#d4d4d4" stroke="#0e0e0e" stroke-width="0.7" stroke-linejoin="round" />
<polygon points="1123.0,663.0 1185.0,668.0 1186.0,664.0 1125.0,659.0" fill="#e6e6e6" stroke="#0e0e0e" stroke-width="0.7" stroke-linejoin="round" />
<ellipse cx="1012.5" cy="645" rx="6.6" ry="7.6" fill="#777" stroke="#0e0e0e" stroke-width="1" /><ellipse cx="1012.5" cy="645" rx="3.4" ry="4.2" fill="#c9c9c9" stroke="#333" stroke-width="0.8" />
<ellipse cx="1043" cy="792.5" rx="6.6" ry="7.6" fill="#777" stroke="#0e0e0e" stroke-width="1" /><ellipse cx="1043" cy="792.5" rx="3.4" ry="4.2" fill="#c9c9c9" stroke="#333" stroke-width="0.8" />
<ellipse cx="1118.3" cy="743.3" rx="6.6" ry="7.6" fill="#777" stroke="#0e0e0e" stroke-width="1" /><ellipse cx="1118.3" cy="743.3" rx="3.4" ry="4.2" fill="#c9c9c9" stroke="#333" stroke-width="0.8" />
<ellipse cx="1072.5" cy="800" rx="5.6" ry="7" fill="#e2e2e2" stroke="#0e0e0e" stroke-width="1" /><path d="M1068 797Q1072 791 1077 797Q1072 795 1068 797Z" fill="#555" stroke="none" stroke-width="0" stroke-linejoin="round" />
<polygon points="1020.0,728.0 1043.0,723.5 1051.7,733.0 1052.5,761.7 1043.0,770.0 1028.0,775.0" fill="url(#gRoller)" stroke="#0e0e0e" stroke-width="0.9" stroke-linejoin="round" />
<ellipse cx="1049.5" cy="746.5" rx="6.5" ry="21.5" fill="none" stroke="#333" stroke-width="2.5" transform="rotate(-8 1049.5 746.5)" />
<ellipse cx="1004" cy="757.5" rx="26.7" ry="32.5" fill="#8c8c8c" stroke="#0e0e0e" stroke-width="1" transform="rotate(-10 1004 757.5)" />
<ellipse cx="1003" cy="758" rx="22.5" ry="28.5" fill="#2f2f2f" stroke="#0e0e0e" stroke-width="1" transform="rotate(-10 1003 758)" />
<ellipse cx="1001" cy="759" rx="19" ry="25" fill="#b5b5b5" stroke="#0e0e0e" stroke-width="0.8" transform="rotate(-10 1001 759)" />
<polygon points="981.7,743.3 1003.0,735.8 1016.7,751.7 998.3,760.0" fill="#dadada" stroke="#0e0e0e" stroke-width="0.8" stroke-linejoin="round" />
<polygon points="998.3,760.0 1016.7,751.7 1016.7,772.0 998.3,781.7" fill="#ebebeb" stroke="#0e0e0e" stroke-width="0.8" stroke-linejoin="round" />
<polygon points="965.8,753.3 981.7,743.3 998.3,760.0 998.3,781.7 981.7,789.0 966.7,775.0" fill="#bcbcbc" stroke="#0e0e0e" stroke-width="0.8" stroke-linejoin="round" />
<ellipse cx="981.7" cy="766" rx="3.6" ry="4.6" fill="#e8e8e8" stroke="#0e0e0e" stroke-width="0.9" /><ellipse cx="1006.7" cy="767.5" rx="4.6" ry="7.6" fill="#fafafa" stroke="#0e0e0e" stroke-width="0.9" />
<polygon points="1061.7,816.7 1093.0,804.0 1103.0,813.0 1103.0,826.7 1071.7,840.0" fill="url(#gWhiteCyl)" stroke="#0e0e0e" stroke-width="0.9" stroke-linejoin="round" />
<polygon points="1056.0,817.0 1063.0,815.5 1070.0,822.0 1071.0,834.0 1066.0,841.0 1057.5,840.5 1051.5,832.0 1051.0,823.0" fill="#a8a8a8" stroke="#0e0e0e" stroke-width="0.9" stroke-linejoin="round" />
<ellipse cx="1061" cy="828.5" rx="5" ry="6.2" fill="#d6d6d6" stroke="#0e0e0e" stroke-width="0.8" /><ellipse cx="1061" cy="828.5" rx="2.6" ry="3.4" fill="#666" stroke="none" stroke-width="0" />
</g>
<g id="idlers">
<polygon points="1103.0,677.0 1130.0,664.0 1143.0,666.5 1148.0,680.0 1147.0,693.0 1118.0,704.0 1110.0,703.0" fill="url(#gOrange)" stroke="#0e0e0e" stroke-width="0.9" stroke-linejoin="round" />
<polygon points="1126.0,765.0 1143.0,757.0 1155.0,770.0 1165.0,784.0 1143.0,792.0 1135.0,791.0" fill="url(#gOrange)" stroke="#0e0e0e" stroke-width="0.9" stroke-linejoin="round" />
</g>
<g id="belt">
<polygon points="1108.1,674.0 1104.6,671.0 1101.1,668.0 1097.6,664.9 1094.0,661.8 1090.5,658.7 1086.9,655.6 1083.2,652.6 1079.5,649.5 1075.8,646.6 1072.0,643.7 1068.2,640.8 1064.3,638.1 1060.3,635.5 1056.3,633.0 1052.2,630.7 1048.0,628.5 1043.8,626.4 1039.4,624.6 1035.0,622.9 1030.5,621.5 1026.0,620.2 1021.4,619.2 1016.7,618.4 1012.1,617.9 1007.4,617.6 1002.7,617.5 998.1,617.8 993.4,618.3 988.7,619.1 984.1,620.1 979.5,621.4 975.0,622.9 970.5,624.6 966.2,626.5 961.9,628.6 957.7,630.9 953.7,633.4 949.8,636.1 946.0,638.9 942.4,642.0 939.0,645.2 935.7,648.6 932.7,652.2 929.8,655.9 927.1,659.8 924.7,663.8 922.4,668.0 920.3,672.2 918.4,676.6 916.7,681.0 915.2,685.5 913.9,690.0 912.7,694.6 911.8,699.2 911.0,703.9 910.4,708.5 910.0,713.2 909.7,717.9 909.5,722.7 909.6,727.4 909.7,732.1 910.0,736.8 910.5,741.6 911.0,746.3 911.7,751.0 912.5,755.7 913.4,760.3 914.5,764.9 915.6,769.5 916.9,774.1 918.2,778.6 919.7,783.1 921.3,787.5 923.0,791.9 924.8,796.3 926.8,800.6 928.8,804.8 931.0,809.0 933.3,813.1 935.6,817.1 938.1,821.1 940.7,825.0 943.5,828.8 946.3,832.6 949.3,836.3 952.3,839.9 955.5,843.4 958.8,846.8 962.2,850.1 965.8,853.3 969.4,856.4 973.1,859.5 977.0,862.3 980.9,865.1 985.0,867.7 989.1,870.1 993.3,872.4 997.5,874.4 1001.9,876.3 1006.3,878.0 1010.7,879.4 1015.2,880.6 1019.7,881.6 1024.3,882.3 1028.9,882.8 1033.5,883.0 1038.2,882.8 1042.8,882.5 1047.5,881.8 1052.1,880.9 1056.7,879.7 1061.2,878.3 1065.7,876.7 1070.1,874.9 1074.4,872.8 1078.6,870.6 1082.7,868.2 1086.7,865.6 1090.5,862.8 1094.3,859.9 1097.9,856.8 1101.3,853.6 1104.6,850.2 1107.8,846.7 1110.7,843.1 1113.6,839.3 1116.3,835.4 1118.8,831.5 1121.2,827.4 1123.5,823.2 1125.5,819.0 1127.5,814.7 1129.3,810.3 1130.9,805.8 1132.4,801.3 1133.7,796.8 1134.9,792.2 1136.0,787.6 1136.9,783.0 1122.4,766.0 1120.5,770.8 1119.1,775.8 1118.0,781.0 1117.1,786.2 1116.2,791.4 1115.2,796.5 1113.9,801.6 1112.4,806.5 1110.6,811.3 1108.5,816.1 1106.2,820.7 1103.7,825.2 1100.9,829.6 1097.9,833.9 1094.8,838.1 1091.5,842.2 1088.2,846.4 1085.0,850.5 1081.6,854.5 1078.2,858.4 1074.6,862.1 1070.8,865.7 1066.8,868.9 1066.8,868.8 1062.5,869.8 1058.1,870.4 1053.8,870.7 1049.6,870.7 1045.3,870.4 1041.1,869.8 1037.0,868.9 1032.8,867.8 1028.8,866.5 1024.8,865.0 1020.8,863.3 1017.0,861.4 1013.2,859.4 1009.5,857.3 1005.8,855.0 1002.3,852.7 998.8,850.2 995.4,847.6 992.1,845.0 988.9,842.2 985.8,839.3 982.7,836.4 979.7,833.3 976.8,830.2 974.0,827.0 971.3,823.7 968.7,820.3 966.1,816.9 963.7,813.4 961.3,809.8 959.0,806.2 956.8,802.5 954.6,798.8 952.6,795.0 950.6,791.1 948.8,787.3 947.0,783.3 945.4,779.4 943.8,775.4 942.3,771.4 941.0,767.3 939.7,763.2 938.6,759.1 937.6,754.9 936.6,750.8 935.8,746.6 935.1,742.4 934.6,738.1 934.1,733.9 933.8,729.7 933.6,725.4 933.5,721.2 933.6,716.9 933.8,712.7 934.1,708.4 934.5,704.2 935.1,700.0 935.9,695.7 936.7,691.5 937.8,687.3 938.9,683.2 940.3,679.1 941.8,675.1 943.6,671.2 945.6,667.5 947.9,664.0 950.5,660.8 953.3,657.8 956.4,655.0 959.7,652.3 963.2,649.8 966.7,647.2 970.3,644.7 973.9,642.1 977.5,639.6 981.2,637.3 984.9,635.2 988.8,633.4 992.8,632.0 996.8,631.1 1001.0,630.6 1005.2,630.5 1009.4,630.7 1013.5,631.3 1017.6,632.3 1021.5,633.5 1025.4,635.1 1029.1,636.9 1032.8,639.0 1036.4,641.3 1040.0,643.7 1043.4,646.4 1046.8,649.1 1050.2,652.0 1053.5,654.9 1056.7,657.9 1059.9,660.9 1063.1,663.9 1066.3,666.9 1069.4,669.9 1072.6,672.7 1075.7,675.5 1078.8,678.2 1081.9,680.9 1084.9,683.7 1088.0,686.6 1091.1,689.6 1094.1,692.7 1097.1,696.0" fill="url(#gBeltV)" stroke="none" stroke-width="0" stroke-linejoin="round" />
<polygon points="972.7,624.5 976.5,622.8 980.4,621.3 984.3,620.0 988.2,619.0 992.1,618.2 996.0,617.7 999.8,617.3 1003.7,617.2 1007.6,617.3 1011.4,617.5 1015.2,618.0 1019.0,618.6 1022.8,619.4 1026.6,620.3 1030.3,621.4 1034.0,622.6 1037.7,624.0 1041.3,625.5 1044.9,627.2 1048.5,628.9 1052.0,630.8 1055.5,632.7 1058.9,634.8 1062.3,636.9 1065.6,639.1 1068.9,641.4 1072.1,643.7 1075.3,646.1 1078.5,648.6 1081.6,651.0 1084.7,653.6 1087.7,656.1 1090.7,658.7 1093.6,661.2 1096.6,663.8 1099.5,666.4 1102.3,669.0 1105.2,671.5 1108.0,674.1 1100.1,690.8 1097.5,688.5 1095.0,686.3 1092.4,684.0 1089.9,681.6 1087.4,679.2 1084.8,676.9 1082.3,674.5 1079.8,672.1 1077.2,669.6 1074.7,667.2 1072.1,664.8 1069.5,662.4 1066.9,660.1 1064.3,657.7 1061.7,655.4 1059.0,653.1 1056.3,650.9 1053.6,648.7 1050.9,646.6 1048.1,644.5 1045.2,642.5 1042.4,640.5 1039.4,638.7 1036.5,636.9 1033.5,635.2 1030.4,633.6 1027.3,632.1 1024.2,630.7 1021.0,629.4 1017.7,628.2 1014.5,627.2 1011.1,626.3 1007.8,625.6 1004.3,625.0 1000.9,624.5 997.3,624.3 993.8,624.1 990.2,624.2 986.6,624.4" fill="#5e5e5e" stroke="none" stroke-width="0" stroke-linejoin="round" />
<polyline points="1100.1,690.8 1097.5,688.5 1095.0,686.3 1092.4,684.0 1089.9,681.6 1087.4,679.2 1084.8,676.9 1082.3,674.5 1079.8,672.1 1077.2,669.6 1074.7,667.2 1072.1,664.8 1069.5,662.4 1066.9,660.1 1064.3,657.7 1061.7,655.4 1059.0,653.1 1056.3,650.9 1053.6,648.7 1050.9,646.6 1048.1,644.5 1045.2,642.5 1042.4,640.5 1039.4,638.7 1036.5,636.9 1033.5,635.2 1030.4,633.6 1027.3,632.1 1024.2,630.7 1021.0,629.4 1017.7,628.2 1014.5,627.2 1011.1,626.3 1007.8,625.6 1004.3,625.0 1000.9,624.5 997.3,624.3 993.8,624.1 990.2,624.2 986.6,624.4" fill="none" stroke="#2a2a2a" stroke-width="0.9" stroke-linejoin="round" stroke-linecap="round" />
<polygon points="1100.1,690.8 1097.5,688.5 1095.0,686.3 1092.4,684.0 1089.9,681.6 1087.4,679.2 1084.8,676.9 1082.3,674.5 1079.8,672.1 1077.2,669.6 1074.7,667.2 1072.1,664.8 1069.5,662.4 1066.9,660.1 1064.3,657.7 1061.7,655.4 1059.0,653.1 1056.3,650.9 1053.6,648.7 1050.9,646.6 1048.1,644.5 1045.2,642.5 1042.4,640.5 1039.4,638.7 1036.5,636.9 1033.5,635.2 1030.4,633.6 1027.3,632.1 1024.2,630.7 1021.0,629.4 1017.7,628.2 1014.5,627.2 1011.1,626.3 1007.8,625.6 1004.3,625.0 1000.9,624.5 997.3,624.3 993.8,624.1 990.2,624.2 986.6,624.4 1000.0,629.2 1003.2,629.5 1006.3,629.9 1009.4,630.4 1012.4,631.0 1015.4,631.9 1018.3,632.8 1021.1,633.8 1023.9,635.0 1026.7,636.3 1029.4,637.6 1032.1,639.1 1034.7,640.7 1037.3,642.3 1039.8,644.0 1042.3,645.8 1044.8,647.7 1047.2,649.6 1049.7,651.5 1052.0,653.5 1054.4,655.5 1056.8,657.6 1059.1,659.7 1061.4,661.8 1063.7,663.9 1065.9,666.0 1068.2,668.2 1070.5,670.3 1072.7,672.5 1074.9,674.6 1077.2,676.8 1079.4,678.9 1081.6,681.1 1083.8,683.2 1086.1,685.3 1088.3,687.4 1090.5,689.5 1092.7,691.6 1095.0,693.6 1097.2,695.7" fill="#343434" stroke="none" stroke-width="0" stroke-linejoin="round" />
<polyline points="916.7,681.0 915.2,685.5 913.9,690.0 912.7,694.6 911.8,699.2 911.0,703.9 910.4,708.5 910.0,713.2 909.7,717.9 909.5,722.7 909.6,727.4 909.7,732.1 910.0,736.8 910.5,741.6 911.0,746.3 911.7,751.0 912.5,755.7 913.4,760.3 914.5,764.9 915.6,769.5 916.9,774.1 918.2,778.6 919.7,783.1 921.3,787.5 923.0,791.9 924.8,796.3 926.8,800.6 928.8,804.8 931.0,809.0 933.3,813.1 935.6,817.1 938.1,821.1 940.7,825.0 943.5,828.8 946.3,832.6 949.3,836.3 952.3,839.9 955.5,843.4 958.8,846.8 962.2,850.1 965.8,853.3 969.4,856.4 973.1,859.5 977.0,862.3 980.9,865.1 985.0,867.7 989.1,870.1 993.3,872.4 997.5,874.4 1001.9,876.3 1006.3,878.0 1010.7,879.4 1015.2,880.6 1019.7,881.6 1024.3,882.3 1028.9,882.8 1033.5,883.0 1038.2,882.8 1042.8,882.5 1047.5,881.8 1052.1,880.9 1056.7,879.7" fill="none" stroke="url(#gBeltR)" stroke-width="3.2" stroke-linejoin="round" stroke-linecap="round" />
<polygon points="1122.4,766.0 1120.5,770.8 1119.1,775.8 1118.0,781.0 1117.1,786.2 1116.2,791.4 1115.2,796.5 1113.9,801.6 1112.4,806.5 1110.6,811.3 1108.5,816.1 1106.2,820.7 1103.7,825.2 1100.9,829.6 1097.9,833.9 1094.8,838.1 1091.5,842.2 1088.2,846.4 1085.0,850.5 1081.6,854.5 1078.2,858.4 1074.6,862.1 1070.8,865.7 1066.8,868.9 1078.1,868.3 1083.8,866.0 1089.1,862.9 1093.9,859.2 1098.3,855.0 1102.3,850.3 1106.0,845.4 1109.2,840.3 1112.2,834.9 1114.8,829.3 1117.2,823.6 1119.3,817.8 1121.2,811.9 1122.9,806.0 1124.4,800.1 1125.7,794.1 1127.0,788.1 1128.1,782.1 1129.1,776.1 1130.1,770.0" fill="#2b2b2b" stroke="none" stroke-width="0" stroke-linejoin="round" />
<polyline points="1108.1,674.0 1104.6,671.0 1101.1,668.0 1097.6,664.9 1094.0,661.8 1090.5,658.7 1086.9,655.6 1083.2,652.6 1079.5,649.5 1075.8,646.6 1072.0,643.7 1068.2,640.8 1064.3,638.1 1060.3,635.5 1056.3,633.0 1052.2,630.7 1048.0,628.5 1043.8,626.4 1039.4,624.6 1035.0,622.9 1030.5,621.5 1026.0,620.2 1021.4,619.2 1016.7,618.4 1012.1,617.9 1007.4,617.6 1002.7,617.5 998.1,617.8 993.4,618.3 988.7,619.1 984.1,620.1 979.5,621.4 975.0,622.9 970.5,624.6 966.2,626.5 961.9,628.6 957.7,630.9 953.7,633.4 949.8,636.1 946.0,638.9 942.4,642.0 939.0,645.2 935.7,648.6 932.7,652.2 929.8,655.9 927.1,659.8 924.7,663.8 922.4,668.0 920.3,672.2 918.4,676.6 916.7,681.0 915.2,685.5 913.9,690.0 912.7,694.6 911.8,699.2 911.0,703.9 910.4,708.5 910.0,713.2 909.7,717.9 909.5,722.7 909.6,727.4 909.7,732.1 910.0,736.8 910.5,741.6 911.0,746.3 911.7,751.0 912.5,755.7 913.4,760.3 914.5,764.9 915.6,769.5 916.9,774.1 918.2,778.6 919.7,783.1 921.3,787.5 923.0,791.9 924.8,796.3 926.8,800.6 928.8,804.8 931.0,809.0 933.3,813.1 935.6,817.1 938.1,821.1 940.7,825.0 943.5,828.8 946.3,832.6 949.3,836.3 952.3,839.9 955.5,843.4 958.8,846.8 962.2,850.1 965.8,853.3 969.4,856.4 973.1,859.5 977.0,862.3 980.9,865.1 985.0,867.7 989.1,870.1 993.3,872.4 997.5,874.4 1001.9,876.3 1006.3,878.0 1010.7,879.4 1015.2,880.6 1019.7,881.6 1024.3,882.3 1028.9,882.8 1033.5,883.0 1038.2,882.8 1042.8,882.5 1047.5,881.8 1052.1,880.9 1056.7,879.7 1061.2,878.3 1065.7,876.7 1070.1,874.9 1074.4,872.8 1078.6,870.6 1082.7,868.2 1086.7,865.6 1090.5,862.8 1094.3,859.9 1097.9,856.8 1101.3,853.6 1104.6,850.2 1107.8,846.7 1110.7,843.1 1113.6,839.3 1116.3,835.4 1118.8,831.5 1121.2,827.4 1123.5,823.2 1125.5,819.0 1127.5,814.7 1129.3,810.3 1130.9,805.8 1132.4,801.3 1133.7,796.8 1134.9,792.2 1136.0,787.6 1136.9,783.0 1122.4,766.0 1120.5,770.8 1119.1,775.8 1118.0,781.0 1117.1,786.2 1116.2,791.4 1115.2,796.5 1113.9,801.6 1112.4,806.5 1110.6,811.3 1108.5,816.1 1106.2,820.7 1103.7,825.2 1100.9,829.6 1097.9,833.9 1094.8,838.1 1091.5,842.2 1088.2,846.4 1085.0,850.5 1081.6,854.5 1078.2,858.4 1074.6,862.1 1070.8,865.7 1066.8,868.9 1066.8,868.8 1062.5,869.8 1058.1,870.4 1053.8,870.7 1049.6,870.7 1045.3,870.4 1041.1,869.8 1037.0,868.9 1032.8,867.8 1028.8,866.5 1024.8,865.0 1020.8,863.3 1017.0,861.4 1013.2,859.4 1009.5,857.3 1005.8,855.0 1002.3,852.7 998.8,850.2 995.4,847.6 992.1,845.0 988.9,842.2 985.8,839.3 982.7,836.4 979.7,833.3 976.8,830.2 974.0,827.0 971.3,823.7 968.7,820.3 966.1,816.9 963.7,813.4 961.3,809.8 959.0,806.2 956.8,802.5 954.6,798.8 952.6,795.0 950.6,791.1 948.8,787.3 947.0,783.3 945.4,779.4 943.8,775.4 942.3,771.4 941.0,767.3 939.7,763.2 938.6,759.1 937.6,754.9 936.6,750.8 935.8,746.6 935.1,742.4 934.6,738.1 934.1,733.9 933.8,729.7 933.6,725.4 933.5,721.2 933.6,716.9 933.8,712.7 934.1,708.4 934.5,704.2 935.1,700.0 935.9,695.7 936.7,691.5 937.8,687.3 938.9,683.2 940.3,679.1 941.8,675.1 943.6,671.2 945.6,667.5 947.9,664.0 950.5,660.8 953.3,657.8 956.4,655.0 959.7,652.3 963.2,649.8 966.7,647.2 970.3,644.7 973.9,642.1 977.5,639.6 981.2,637.3 984.9,635.2 988.8,633.4 992.8,632.0 996.8,631.1 1001.0,630.6 1005.2,630.5 1009.4,630.7 1013.5,631.3 1017.6,632.3 1021.5,633.5 1025.4,635.1 1029.1,636.9 1032.8,639.0 1036.4,641.3 1040.0,643.7 1043.4,646.4 1046.8,649.1 1050.2,652.0 1053.5,654.9 1056.7,657.9 1059.9,660.9 1063.1,663.9 1066.3,666.9 1069.4,669.9 1072.6,672.7 1075.7,675.5 1078.8,678.2 1081.9,680.9 1084.9,683.7 1088.0,686.6 1091.1,689.6 1094.1,692.7 1097.1,696.0 1108.1,674.0" fill="none" stroke="#080808" stroke-width="1.5" stroke-linejoin="round" stroke-linecap="round" />
<polyline points="1112.5,816.0 1128.8,810.0" fill="none" stroke="#1c1c1c" stroke-width="0.9" stroke-linejoin="round" stroke-linecap="round" /><polyline points="1061.7,655.8 1079.2,649.2" fill="none" stroke="#1a1a1a" stroke-width="0.9" stroke-linejoin="round" stroke-linecap="round" />
<polygon points="1097.0,697.0 1108.0,708.0 1146.0,697.5 1147.5,692.0 1120.0,703.0" fill="#2d2d2d" stroke="#141414" stroke-width="0.8" stroke-linejoin="round" />
</g>
<g id="idler-caps">
<ellipse cx="1108" cy="691.2" rx="11.3" ry="15.6" fill="#8a5a1e" stroke="#0e0e0e" stroke-width="1" transform="rotate(-14 1108 691.2)" /><ellipse cx="1108" cy="691.2" rx="9.4" ry="13.2" fill="#bdbdbd" stroke="#444" stroke-width="0.8" transform="rotate(-14 1108 691.2)" /><ellipse cx="1108.5" cy="691.2" rx="5.8" ry="8.6" fill="#f6f2ec" stroke="#555" stroke-width="0.8" transform="rotate(-14 1108.5 691.2)" />
<ellipse cx="1130" cy="778.7" rx="11.3" ry="15.6" fill="#8a5a1e" stroke="#0e0e0e" stroke-width="1" transform="rotate(-14 1130 778.7)" /><ellipse cx="1130" cy="778.7" rx="9.4" ry="13.2" fill="#bdbdbd" stroke="#444" stroke-width="0.8" transform="rotate(-14 1130 778.7)" /><ellipse cx="1130.5" cy="778.7" rx="5.8" ry="8.6" fill="#f6f2ec" stroke="#555" stroke-width="0.8" transform="rotate(-14 1130.5 778.7)" />
</g>
<g id="pulley">
<ellipse cx="1222.8" cy="721.9" rx="49.2" ry="63" fill="#c2c6d2" stroke="#0e0e0e" stroke-width="1.1" transform="rotate(-7 1222.8 721.9)" />
<ellipse cx="1218.5" cy="723" rx="48.6" ry="62.6" fill="url(#gPulleySide)" stroke="#3a3f55" stroke-width="0.9" transform="rotate(-7 1218.5 723)" />
<polygon points="1179.5,672.6 1215.0,659.5 1240.0,783.0 1194.6,797.6" fill="url(#gPulleySide)" stroke="none" stroke-width="0" stroke-linejoin="round" />
<polyline points="1180.0,672.4 1214.5,659.6" fill="none" stroke="#0e0e0e" stroke-width="1" stroke-linejoin="round" stroke-linecap="round" /><polyline points="1196.0,797.8 1239.0,784.5" fill="none" stroke="#0e0e0e" stroke-width="1" stroke-linejoin="round" stroke-linecap="round" />
<polygon points="1197.0,676.0 1209.0,677.5 1221.0,684.5 1229.6,694.4 1222.0,693.7 1216.0,687.0 1208.0,681.5 1197.0,678.8" fill="#454545" stroke="#0e0e0e" stroke-width="0.9" stroke-linejoin="round" />
<polygon points="1229.6,694.4 1237.0,697.6 1243.0,681.8 1238.5,684.0 1235.5,693.0" fill="#a9aec2" stroke="#0e0e0e" stroke-width="0.9" stroke-linejoin="round" />
<ellipse cx="1246.6" cy="768.5" rx="4.4" ry="10.2" fill="#e6eaf6" stroke="#0e0e0e" stroke-width="0.9" transform="rotate(25 1246.6 768.5)" />
<ellipse cx="1187" cy="735.1" rx="49.2" ry="63" fill="#757a8c" stroke="#0e0e0e" stroke-width="1.1" transform="rotate(-7 1187 735.1)" />
<ellipse cx="1186" cy="735.5" rx="44.2" ry="54.8" fill="url(#gPulleyFace)" stroke="#2a2e40" stroke-width="1" transform="rotate(-7 1186 735.5)" />
<ellipse cx="1186" cy="735.5" rx="41.6" ry="52" fill="none" stroke="#50556c" stroke-width="0.7" transform="rotate(-7 1186 735.5)" />
<ellipse cx="1177.5" cy="716" rx="20.5" ry="27.2" fill="#74798c" stroke="#0e0e0e" stroke-width="1" transform="rotate(-16 1177.5 716)" />
<path d="M1157.6 706Q1157 724 1168 735Q1176 742.6 1185 742Q1172 738 1165 722Q1161.6 712 1163.6 699Q1158.6 700.6 1157.6 706Z" fill="#eef0f8" stroke="#555a70" stroke-width="0.6" stroke-linejoin="round" />
<path d="M1189 700Q1196 707 1197 719L1192 722Q1193 711 1187 703Z" fill="#3a3a3a" stroke="none" stroke-width="0" stroke-linejoin="round" />
<polyline points="1183.7,742.2 1197.0,733.0" fill="none" stroke="#0e0e0e" stroke-width="0.9" stroke-linejoin="round" stroke-linecap="round" />
<ellipse cx="1178.5" cy="721" rx="3.8" ry="4.4" fill="#b3aa98" stroke="#0e0e0e" stroke-width="0.8" />
<ellipse cx="1203.7" cy="755.9" rx="9.9" ry="13" fill="url(#gHole)" stroke="#1c1c1c" stroke-width="1" transform="rotate(-6 1203.7 755.9)"/>
<path d="M1199 749Q1201 745.5 1205.5 746Q1209 747.5 1208.6 752Q1206 754 1203 752.4Q1201.4 749.6 1199 749Z" fill="#8a8fa6" stroke="#3a3f55" stroke-width="0.6" stroke-linejoin="round" />
<ellipse cx="1148.1" cy="733.7" rx="4.5" ry="6" fill="#d4d8e8" stroke="#0e0e0e" stroke-width="0.9" /><path d="M1144.1999999999998 733.2Q1148.1 726.7 1152.0 733.2Q1149.1 730.7 1144.1999999999998 733.2Z" fill="#5d627a" stroke="none" stroke-width="0" stroke-linejoin="round" />
<ellipse cx="1214" cy="726.3" rx="4.5" ry="6" fill="#d4d8e8" stroke="#0e0e0e" stroke-width="0.9" /><path d="M1210.1 725.8Q1214 719.3 1217.9 725.8Q1215 723.3 1210.1 725.8Z" fill="#5d627a" stroke="none" stroke-width="0" stroke-linejoin="round" />
<ellipse cx="1179.7" cy="780.3" rx="4.3" ry="5.6" fill="#d4d8e8" stroke="#0e0e0e" stroke-width="0.9" /><path d="M1176.0 779.8Q1179.7 773.6999999999999 1183.4 779.8Q1180.7 777.6999999999999 1176.0 779.8Z" fill="#5d627a" stroke="none" stroke-width="0" stroke-linejoin="round" />
<ellipse cx="1194" cy="781" rx="4.3" ry="5.6" fill="#d4d8e8" stroke="#0e0e0e" stroke-width="0.9" /><path d="M1190.3 780.5Q1194 774.4 1197.7 780.5Q1195 778.4 1190.3 780.5Z" fill="#5d627a" stroke="none" stroke-width="0" stroke-linejoin="round" />
<ellipse cx="1207.4" cy="777.4" rx="4.3" ry="5.6" fill="#d4d8e8" stroke="#0e0e0e" stroke-width="0.9" /><path d="M1203.7 776.9Q1207.4 770.8 1211.1000000000001 776.9Q1208.4 774.8 1203.7 776.9Z" fill="#5d627a" stroke="none" stroke-width="0" stroke-linejoin="round" />
</g>
</svg>
</body></html>
